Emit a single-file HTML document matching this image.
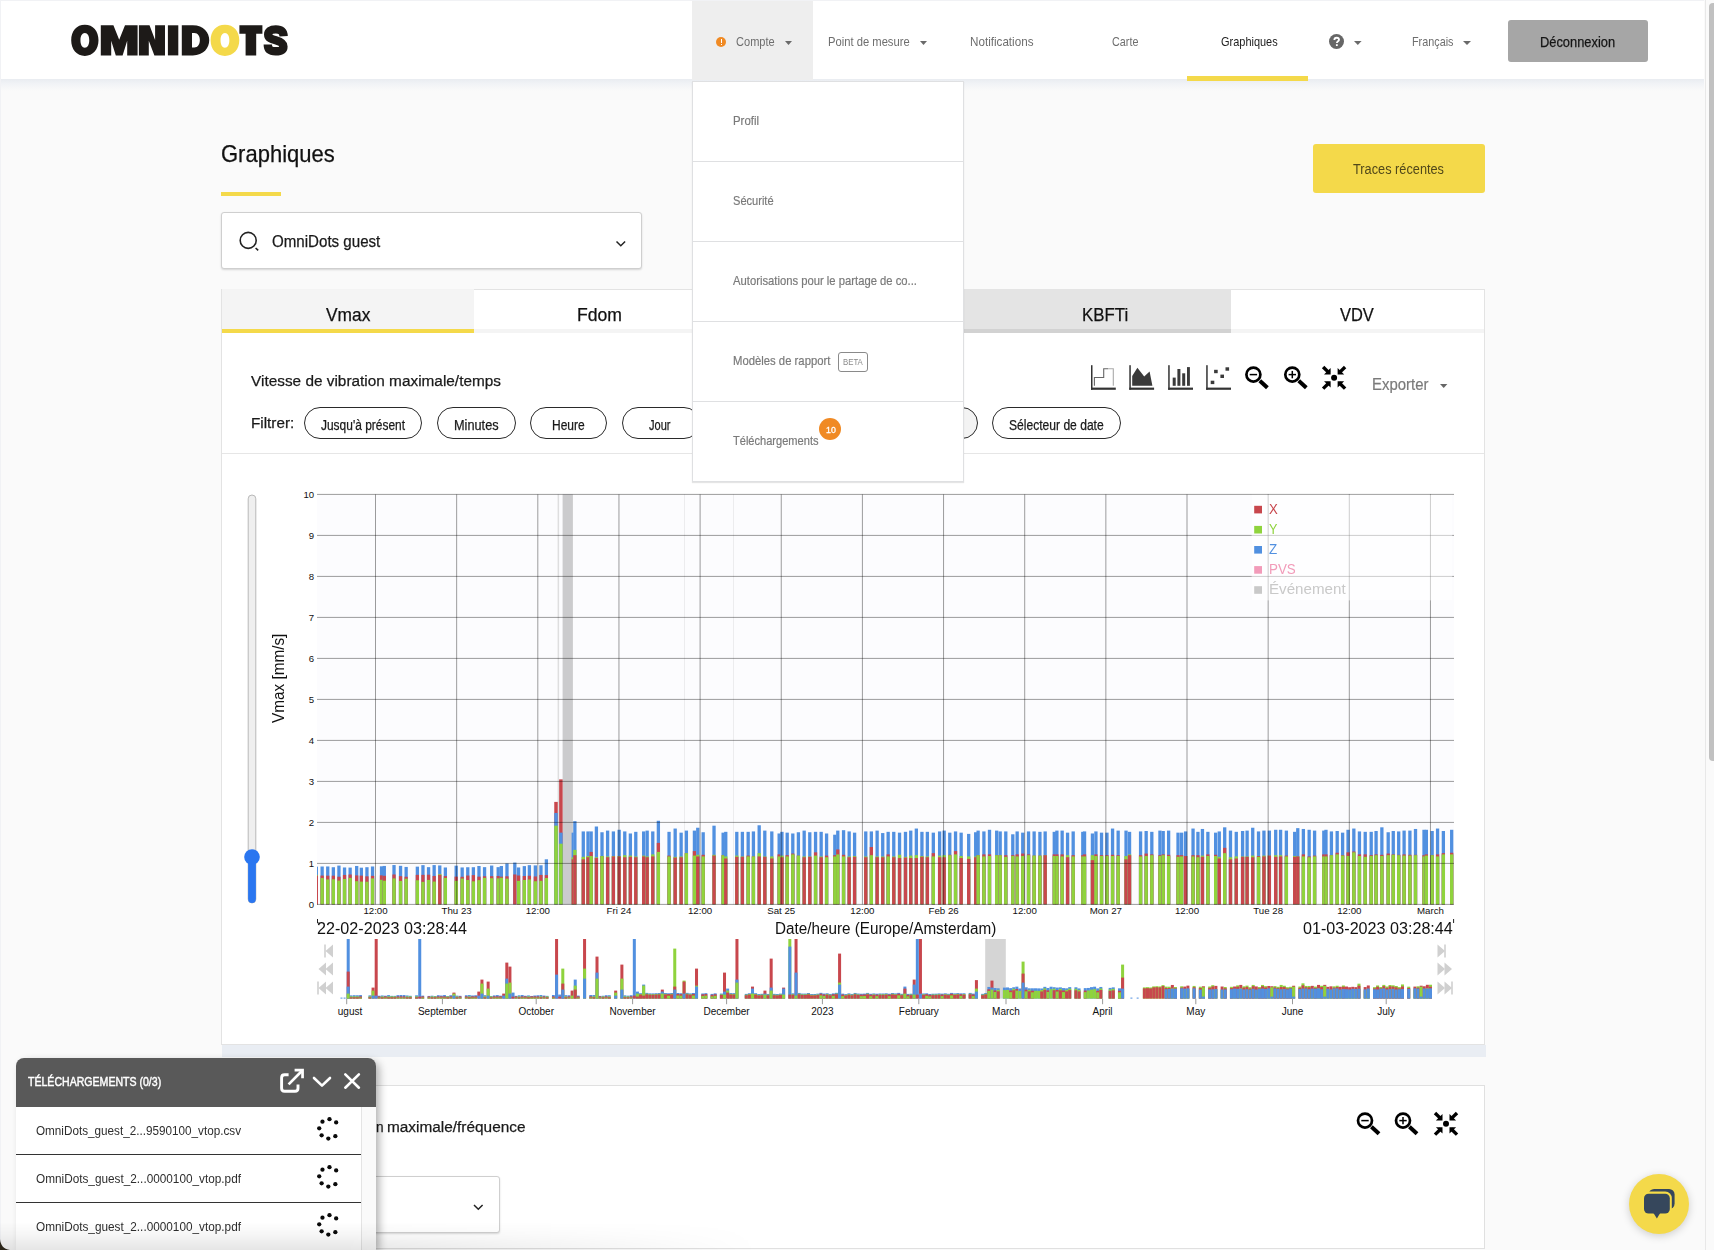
<!DOCTYPE html>
<html lang="fr"><head><meta charset="utf-8"><title>OmniDots - Graphiques</title><style>
html,body{margin:0;padding:0;}
html{width:1714px;height:1250px;overflow:hidden;}
body{width:1714px;height:1250px;overflow:hidden;position:relative;background:#fafafa;font-family:"Liberation Sans",sans-serif;}
.abs{position:absolute;}
.t{position:absolute;white-space:nowrap;line-height:1;transform-origin:0 0;display:block;}
svg{display:block;overflow:visible;}
</style></head>
<body>
<div class="abs" style="left:0;top:0;width:1714px;height:79px;background:#fff;"></div>
<div class="abs" style="left:0;top:79px;width:1714px;height:12px;background:linear-gradient(#e9ecf1,#f1f3f6 40%,#fafafa);"></div>
<div class="abs" style="left:0;top:0;width:1714px;height:1px;background:#f1f2f5;"></div>
<div class="abs" style="left:0;top:0;width:1px;height:1250px;background:#f1f2f5;"></div>
<div class="abs" style="left:692px;top:1px;width:121px;height:79px;background:#eeeeee;"></div>
<svg class="abs" style="left:60px;top:15px" width="240" height="50" viewBox="60 15 240 50"><path d="M84.85 24.80 C93.04 24.80 98.50 31.02 98.50 40.35 C98.50 49.68 93.04 55.90 84.85 55.90 C76.66 55.90 71.20 49.68 71.20 40.35 C71.20 31.02 76.66 24.80 84.85 24.80 Z M84.85 32.95 C82.12 32.95 80.45 35.76 80.45 40.35 C80.45 44.94 82.12 47.75 84.85 47.75 C87.58 47.75 89.25 44.94 89.25 40.35 C89.25 35.76 87.58 32.95 84.85 32.95 Z" fill="#1d1a18" fill-rule="evenodd"/><path d="M100.80 55.40 V25.30 H113.40 L119.20 39.80 L125.00 25.30 H137.60 V55.40 H127.20 V40.80 L122.60 55.40 H115.80 L111.20 40.80 V55.40 Z" fill="#1d1a18"/><path d="M138.90 55.40 V25.30 H149.50 L155.10 39.90 V25.30 H165.00 V55.40 H154.40 L148.80 40.80 V55.40 Z" fill="#1d1a18"/><rect x="167.9" y="25.30" width="10.4" height="30.10" fill="#1d1a18"/><path d="M181.80 25.30 H192.80 C214.80 25.30 214.80 55.40 192.80 55.40 H181.80 Z M192.00 33.10 H194.30 C201.77 33.10 201.77 47.60 194.30 47.60 H192.00 Z" fill="#1d1a18" fill-rule="evenodd"/><path d="M224.95 24.80 C233.56 24.80 239.30 31.02 239.30 40.35 C239.30 49.68 233.56 55.90 224.95 55.90 C216.34 55.90 210.60 49.68 210.60 40.35 C210.60 31.02 216.34 24.80 224.95 24.80 Z M224.95 32.95 C222.22 32.95 220.55 35.76 220.55 40.35 C220.55 44.94 222.22 47.75 224.95 47.75 C227.68 47.75 229.35 44.94 229.35 40.35 C229.35 35.76 227.68 32.95 224.95 32.95 Z" fill="#f4d94a" fill-rule="evenodd"/><path d="M239.40 25.30 H262.40 V33.70 H256.20 V55.40 H245.60 V33.70 H239.40 Z" fill="#1d1a18"/><path d="M283.6 36.2 C283.4 31.6 281 29.4 275.8 29.4 C270.4 29.4 268.2 31.6 268.2 34.4 C268.2 38.0 271.4 39.0 275.8 40.3 C280.6 41.7 283.4 43.0 283.4 46.4 C283.4 49.4 281 51.3 275.6 51.3 C270.2 51.3 267.8 49.2 267.8 44.6" fill="none" stroke="#1d1a18" stroke-width="8.4"/></svg>
<div class="abs" style="left:716.3px;top:37px;width:10px;height:10px;border-radius:50%;background:#f08a24;"></div>
<div class="abs" style="left:720.5px;top:38.8px;width:1.6px;height:4px;background:#fff;"></div>
<div class="abs" style="left:720.5px;top:43.8px;width:1.6px;height:1.6px;background:#fff;"></div>
<span class="t" id="t0" style="left:736.00px;top:36.00px;font-size:12.90px;color:#6e6e6e;transform:scaleX(0.8573);">Compte</span>
<svg class="abs" style="left:785.20px;top:40.60px;" width="7.0" height="4.0" viewBox="0 0 7.0 4.0"><path d="M0 0 H7.0 L3.50 4.0 Z" fill="#6a6a6a"/></svg>
<span class="t" id="t1" style="left:828.40px;top:36.00px;font-size:12.90px;color:#6e6e6e;transform:scaleX(0.8703);">Point de mesure</span>
<svg class="abs" style="left:920.30px;top:40.60px;" width="7.0" height="4.0" viewBox="0 0 7.0 4.0"><path d="M0 0 H7.0 L3.50 4.0 Z" fill="#6a6a6a"/></svg>
<span class="t" id="t2" style="left:970.00px;top:36.00px;font-size:12.90px;color:#6e6e6e;transform:scaleX(0.9043);">Notifications</span>
<span class="t" id="t3" style="left:1112.20px;top:36.00px;font-size:12.90px;color:#6e6e6e;transform:scaleX(0.8373);">Carte</span>
<span class="t" id="t4" style="left:1220.70px;top:36.00px;font-size:12.90px;color:#222;transform:scaleX(0.8506);">Graphiques</span>
<div class="abs" style="left:1187px;top:76px;width:121px;height:5px;background:#f4d94a;"></div>
<div class="abs" style="left:1328.7px;top:33.8px;width:15.4px;height:15.4px;border-radius:50%;background:#666;"></div>
<svg class="abs" style="left:1328.7px;top:33.8px" width="15.4" height="15.4" viewBox="0 0 16 16"><path d="M5.6 6.2 C5.6 4.6 6.7 3.9 8 3.9 C9.4 3.9 10.4 4.7 10.4 6 C10.4 7.6 8.2 7.6 8.2 9.4" fill="none" stroke="#fff" stroke-width="1.9"/><rect x="7.2" y="10.6" width="1.9" height="1.9" fill="#fff"/></svg>
<svg class="abs" style="left:1353.70px;top:40.60px;" width="7.6" height="4.0" viewBox="0 0 7.6 4.0"><path d="M0 0 H7.6 L3.80 4.0 Z" fill="#6a6a6a"/></svg>
<span class="t" id="t5" style="left:1411.60px;top:36.00px;font-size:12.90px;color:#6e6e6e;transform:scaleX(0.8394);">Fran&ccedil;ais</span>
<svg class="abs" style="left:1462.90px;top:40.60px;" width="8.0" height="4.0" viewBox="0 0 8.0 4.0"><path d="M0 0 H8.0 L4.00 4.0 Z" fill="#6a6a6a"/></svg>
<div class="abs" style="left:1508px;top:20px;width:140px;height:42px;border-radius:3px;background:#a6a6a6;"></div>
<span class="t" id="t6" style="left:1539.90px;top:35.00px;font-size:14.30px;color:#151515;transform:scaleX(0.8997);-webkit-text-stroke:0.25px currentColor;">D&eacute;connexion</span>
<span class="t" id="t7" style="left:221.00px;top:142.00px;font-size:24.00px;color:#111;transform:scaleX(0.9164);-webkit-text-stroke:0.25px currentColor;">Graphiques</span>
<div class="abs" style="left:221px;top:192px;width:60px;height:4px;background:#f4d94a;"></div>
<div class="abs" style="left:1313px;top:144px;width:172px;height:49px;border-radius:3px;background:#f4d94a;"></div>
<span class="t" id="t8" style="left:1353.20px;top:161.00px;font-size:15.20px;color:#51481a;transform:scaleX(0.8400);">Traces r&eacute;centes</span>
<div class="abs" style="left:221px;top:212px;width:421px;height:57px;box-sizing:border-box;border:1px solid #cfcfcf;border-radius:3px;background:#fff;box-shadow:0 1px 2px rgba(0,0,0,0.15);"></div>
<svg class="abs" style="left:236px;top:228px" width="26" height="26" viewBox="236 228 26 26"><circle cx="248.2" cy="240.4" r="8" fill="none" stroke="#222" stroke-width="1.6"/><path d="M255.6 248 L258.2 250.4" stroke="#222" stroke-width="1.6" fill="none"/></svg>
<span class="t" id="t9" style="left:272.00px;top:234.00px;font-size:16.00px;color:#1a1a1a;transform:scaleX(0.9440);-webkit-text-stroke:0.25px currentColor;">OmniDots guest</span>
<svg class="abs" style="left:614px;top:238px" width="14" height="12" viewBox="614 238 14 12"><path d="M616.5 241.5 L620.8 245.8 L625.1 241.5" fill="none" stroke="#222" stroke-width="1.5"/></svg>
<div class="abs" style="left:221px;top:289px;width:1264px;height:756px;box-sizing:border-box;border:1px solid #e3e3e3;background:#fff;"></div>
<div class="abs" style="left:222px;top:289px;width:252px;height:40px;background:#f4f4f4;"></div>
<div class="abs" style="left:222px;top:329px;width:252px;height:4px;background:#f4d94a;"></div>
<div class="abs" style="left:474px;top:329px;width:505px;height:4px;background:#f4f4f4;"></div>
<div class="abs" style="left:900px;top:289px;width:331px;height:40px;background:#e4e4e4;"></div>
<div class="abs" style="left:900px;top:329px;width:331px;height:4px;background:#d2d2d2;"></div>
<div class="abs" style="left:1231px;top:329px;width:253px;height:4px;background:#f4f4f4;"></div>
<span class="t" id="t10" style="left:325.50px;top:305.00px;font-size:19.00px;color:#111;transform:scaleX(0.9119);-webkit-text-stroke:0.25px currentColor;">Vmax</span>
<span class="t" id="t11" style="left:577.40px;top:305.00px;font-size:19.00px;color:#111;transform:scaleX(0.9263);-webkit-text-stroke:0.25px currentColor;">Fdom</span>
<span class="t" id="t12" style="left:1081.80px;top:305.00px;font-size:19.00px;color:#111;transform:scaleX(0.8871);-webkit-text-stroke:0.25px currentColor;">KBFTi</span>
<span class="t" id="t13" style="left:1340.20px;top:305.00px;font-size:19.00px;color:#111;transform:scaleX(0.8649);-webkit-text-stroke:0.25px currentColor;">VDV</span>
<span class="t" id="t14" style="left:250.80px;top:373.00px;font-size:15.50px;color:#1a1a1a;transform:scaleX(0.9915);-webkit-text-stroke:0.25px currentColor;">Vitesse de vibration maximale/temps</span>
<span class="t" id="t15" style="left:250.80px;top:415.00px;font-size:15.20px;color:#1a1a1a;transform:scaleX(1.0039);-webkit-text-stroke:0.25px currentColor;">Filtrer:</span>
<div class="abs" style="left:304.0px;top:407px;width:117.8px;height:32px;box-sizing:border-box;border:1px solid #2a2a2a;border-radius:16px;background:#fff;"></div>
<span class="t" id="t16" style="left:320.90px;top:418.00px;font-size:14.00px;color:#1a1a1a;transform:scaleX(0.8536);-webkit-text-stroke:0.25px currentColor;">Jusqu'&agrave; pr&eacute;sent</span>
<div class="abs" style="left:436.8px;top:407px;width:78.9px;height:32px;box-sizing:border-box;border:1px solid #2a2a2a;border-radius:16px;background:#fff;"></div>
<span class="t" id="t17" style="left:453.80px;top:418.00px;font-size:14.00px;color:#1a1a1a;transform:scaleX(0.9096);-webkit-text-stroke:0.25px currentColor;">Minutes</span>
<div class="abs" style="left:530.0px;top:407px;width:76.6px;height:32px;box-sizing:border-box;border:1px solid #2a2a2a;border-radius:16px;background:#fff;"></div>
<span class="t" id="t18" style="left:552.00px;top:418.00px;font-size:14.00px;color:#1a1a1a;transform:scaleX(0.8574);-webkit-text-stroke:0.25px currentColor;">Heure</span>
<div class="abs" style="left:622.0px;top:407px;width:78.0px;height:32px;box-sizing:border-box;border:1px solid #2a2a2a;border-radius:16px;background:#fff;"></div>
<span class="t" id="t19" style="left:649.00px;top:418.00px;font-size:14.00px;color:#1a1a1a;transform:scaleX(0.7894);-webkit-text-stroke:0.25px currentColor;">Jour</span>
<div class="abs" style="left:900.0px;top:407px;width:78.4px;height:32px;box-sizing:border-box;border:1px solid #2a2a2a;border-radius:16px;background:#f3f3f3;"></div>
<div class="abs" style="left:991.7px;top:407px;width:129.0px;height:32px;box-sizing:border-box;border:1px solid #2a2a2a;border-radius:16px;background:#fff;"></div>
<span class="t" id="t20" style="left:1009.00px;top:418.00px;font-size:14.00px;color:#1a1a1a;transform:scaleX(0.8629);-webkit-text-stroke:0.25px currentColor;">S&eacute;lecteur de date</span>
<span class="t" id="t21" style="left:1372.20px;top:377.00px;font-size:16.60px;color:#7a7a7a;transform:scaleX(0.8993);-webkit-text-stroke:0.2px #7a7a7a;">Exporter</span>
<svg class="abs" style="left:1439.60px;top:384.20px;" width="7.4" height="4.0" viewBox="0 0 7.4 4.0"><path d="M0 0 H7.4 L3.70 4.0 Z" fill="#666"/></svg>
<div class="abs" style="left:222px;top:453px;width:1262px;height:1px;background:#e6e6e6;"></div>
<svg class="abs" style="left:1085px;top:360px" width="370" height="36" viewBox="1085 360 370 36"><rect x="1091.0" y="365.2" width="1.5" height="24.6" fill="#333"/><rect x="1091.0" y="387.6" width="24.8" height="2.2" fill="#333"/><path d="M1094.4 385.8 V377.5 H1103.7 V368.8 H1108" fill="none" stroke="#666" stroke-width="1.1"/><path d="M1108 368.8 H1113.3 V385.8" fill="none" stroke="#aaa" stroke-width="1.1"/><rect x="1129.3" y="365.2" width="1.5" height="24.6" fill="#333"/><rect x="1129.3" y="387.6" width="24.8" height="2.2" fill="#333"/><path d="M1132.2 385.8 V376.1 L1137.4 367.7 L1144.2 376.5 L1149.6 371.6 L1152.4 385.8 Z" fill="#3a3a3a"/><rect x="1168.2" y="365.2" width="1.5" height="24.6" fill="#333"/><rect x="1168.2" y="387.6" width="24.8" height="2.2" fill="#333"/><rect x="1172.7" y="377.6" width="3.0" height="8.2" fill="#3a3a3a"/><rect x="1177.4" y="369.0" width="3.0" height="16.8" fill="#3a3a3a"/><rect x="1182.2" y="373.3" width="3.0" height="12.5" fill="#3a3a3a"/><rect x="1187.0" y="367.1" width="2.9" height="18.7" fill="#3a3a3a"/><rect x="1206.2" y="365.2" width="1.5" height="24.6" fill="#333"/><rect x="1206.2" y="387.6" width="24.8" height="2.2" fill="#333"/><rect x="1210.7" y="380.7" width="3.6" height="3.4" fill="#3a3a3a"/><rect x="1214.1" y="369.8" width="3.6" height="3.4" fill="#3a3a3a"/><rect x="1220.4" y="374.6" width="3.6" height="3.4" fill="#3a3a3a"/><rect x="1225.5" y="367.3" width="3.6" height="3.4" fill="#3a3a3a"/><circle cx="1253.40" cy="374.60" r="7.00" fill="none" stroke="#000" stroke-width="2.70"/><path d="M1259.80 380.80 L1267.40 387.80" stroke="#000" stroke-width="4.00" stroke-linecap="butt"/><path d="M1249.70 374.60 H1257.10" stroke="#000" stroke-width="1.50"/><circle cx="1292.30" cy="374.60" r="7.00" fill="none" stroke="#000" stroke-width="2.70"/><path d="M1298.70 380.80 L1306.30 387.80" stroke="#000" stroke-width="4.00" stroke-linecap="butt"/><path d="M1288.60 374.60 H1296.00" stroke="#000" stroke-width="1.50"/><path d="M1292.30 370.90 V378.30" stroke="#000" stroke-width="1.50"/><circle cx="1334.10" cy="377.80" r="3.00" fill="#000"/><path d="M1323.10 367.00 L1329.10 372.90" stroke="#000" stroke-width="3.40"/><path d="M1330.60 374.40 L1324.00 374.40 L1330.60 368.00 Z" fill="#000"/><path d="M1323.10 388.60 L1329.10 382.70" stroke="#000" stroke-width="3.40"/><path d="M1330.60 381.20 L1324.00 381.20 L1330.60 387.60 Z" fill="#000"/><path d="M1345.10 367.00 L1339.10 372.90" stroke="#000" stroke-width="3.40"/><path d="M1337.60 374.40 L1344.20 374.40 L1337.60 368.00 Z" fill="#000"/><path d="M1345.10 388.60 L1339.10 382.70" stroke="#000" stroke-width="3.40"/><path d="M1337.60 381.20 L1344.20 381.20 L1337.60 387.60 Z" fill="#000"/></svg>
<svg class="abs" style="left:222px;top:460px" width="1262" height="580" viewBox="222 460 1262 580" font-family="Liberation Sans, sans-serif"><rect x="317.0" y="494.4" width="1137.0" height="410.0" fill="#fcfcfe"/><rect x="684" y="494.4" width="1" height="410.0" fill="#ececee"/><rect x="733" y="494.4" width="1" height="410.0" fill="#ececee"/><rect x="557.6" y="494.4" width="1.5" height="410.0" fill="#dededf"/><rect x="562.6" y="494.4" width="10.3" height="410.0" fill="#cbcbcd"/><rect x="317.00" y="866.68" width="1.00" height="37.72" fill="#5190e0"/><rect x="317.00" y="874.88" width="1.00" height="29.52" fill="#8fd33d"/><rect x="317.00" y="875.70" width="1.00" height="28.70" fill="#c8474d"/><rect x="320.49" y="866.50" width="3.30" height="37.90" fill="#5190e0"/><rect x="320.49" y="875.55" width="3.30" height="28.85" fill="#c8474d"/><rect x="320.49" y="878.06" width="3.30" height="26.34" fill="#8fd33d"/><rect x="326.09" y="866.46" width="3.30" height="37.94" fill="#5190e0"/><rect x="326.09" y="875.68" width="3.30" height="28.72" fill="#c8474d"/><rect x="326.09" y="879.44" width="3.30" height="24.96" fill="#8fd33d"/><rect x="331.69" y="867.21" width="3.30" height="37.19" fill="#5190e0"/><rect x="331.69" y="875.67" width="3.30" height="28.73" fill="#c8474d"/><rect x="331.69" y="879.27" width="3.30" height="25.13" fill="#8fd33d"/><rect x="337.29" y="865.59" width="3.30" height="38.81" fill="#5190e0"/><rect x="337.29" y="876.70" width="3.30" height="27.70" fill="#c8474d"/><rect x="337.29" y="880.61" width="3.30" height="23.79" fill="#8fd33d"/><rect x="342.89" y="867.46" width="3.30" height="36.94" fill="#5190e0"/><rect x="342.89" y="874.94" width="3.30" height="29.46" fill="#c8474d"/><rect x="342.89" y="879.01" width="3.30" height="25.39" fill="#8fd33d"/><rect x="348.49" y="867.59" width="3.30" height="36.81" fill="#5190e0"/><rect x="348.49" y="874.51" width="3.30" height="29.89" fill="#c8474d"/><rect x="348.49" y="877.89" width="3.30" height="26.51" fill="#8fd33d"/><rect x="355.03" y="865.96" width="3.30" height="38.44" fill="#5190e0"/><rect x="355.03" y="875.42" width="3.30" height="28.98" fill="#c8474d"/><rect x="355.03" y="881.20" width="3.30" height="23.20" fill="#8fd33d"/><rect x="359.69" y="867.67" width="3.30" height="36.73" fill="#5190e0"/><rect x="359.69" y="875.63" width="3.30" height="28.77" fill="#c8474d"/><rect x="359.69" y="881.61" width="3.30" height="22.79" fill="#8fd33d"/><rect x="365.30" y="867.20" width="3.30" height="37.20" fill="#5190e0"/><rect x="365.30" y="876.33" width="3.30" height="28.07" fill="#c8474d"/><rect x="365.30" y="881.73" width="3.30" height="22.67" fill="#8fd33d"/><rect x="370.90" y="866.47" width="3.30" height="37.93" fill="#5190e0"/><rect x="370.90" y="875.85" width="3.30" height="28.55" fill="#c8474d"/><rect x="370.90" y="878.40" width="3.30" height="26.00" fill="#8fd33d"/><rect x="379.86" y="866.32" width="3.30" height="38.08" fill="#5190e0"/><rect x="379.86" y="875.35" width="3.30" height="29.05" fill="#c8474d"/><rect x="379.86" y="879.80" width="3.30" height="24.60" fill="#8fd33d"/><rect x="382.66" y="865.94" width="3.30" height="38.46" fill="#5190e0"/><rect x="382.66" y="875.80" width="3.30" height="28.60" fill="#c8474d"/><rect x="382.66" y="880.71" width="3.30" height="23.69" fill="#8fd33d"/><rect x="392.37" y="865.05" width="3.30" height="39.35" fill="#5190e0"/><rect x="392.37" y="874.48" width="3.30" height="29.92" fill="#c8474d"/><rect x="392.37" y="878.41" width="3.30" height="25.99" fill="#8fd33d"/><rect x="398.90" y="865.82" width="3.30" height="38.58" fill="#5190e0"/><rect x="398.90" y="876.15" width="3.30" height="28.25" fill="#c8474d"/><rect x="398.90" y="880.91" width="3.30" height="23.49" fill="#8fd33d"/><rect x="404.50" y="866.93" width="3.30" height="37.47" fill="#5190e0"/><rect x="404.50" y="876.76" width="3.30" height="27.64" fill="#c8474d"/><rect x="404.50" y="878.71" width="3.30" height="25.69" fill="#8fd33d"/><rect x="415.71" y="866.64" width="3.30" height="37.76" fill="#5190e0"/><rect x="415.71" y="874.85" width="3.30" height="29.55" fill="#c8474d"/><rect x="415.71" y="880.27" width="3.30" height="24.13" fill="#8fd33d"/><rect x="421.31" y="865.15" width="3.30" height="39.25" fill="#5190e0"/><rect x="421.31" y="874.85" width="3.30" height="29.55" fill="#c8474d"/><rect x="421.31" y="881.85" width="3.30" height="22.55" fill="#8fd33d"/><rect x="426.91" y="867.15" width="3.30" height="37.25" fill="#5190e0"/><rect x="426.91" y="874.69" width="3.30" height="29.71" fill="#c8474d"/><rect x="426.91" y="879.92" width="3.30" height="24.48" fill="#8fd33d"/><rect x="432.51" y="865.09" width="3.30" height="39.31" fill="#5190e0"/><rect x="432.51" y="875.95" width="3.30" height="28.45" fill="#c8474d"/><rect x="432.51" y="881.55" width="3.30" height="22.85" fill="#8fd33d"/><rect x="438.11" y="865.45" width="3.30" height="38.95" fill="#5190e0"/><rect x="438.11" y="874.06" width="3.30" height="30.34" fill="#8fd33d"/><rect x="438.11" y="874.88" width="3.30" height="29.52" fill="#c8474d"/><rect x="443.71" y="867.47" width="3.30" height="36.93" fill="#5190e0"/><rect x="443.71" y="876.11" width="3.30" height="28.29" fill="#c8474d"/><rect x="443.71" y="877.90" width="3.30" height="26.50" fill="#8fd33d"/><rect x="454.54" y="865.68" width="3.30" height="38.72" fill="#5190e0"/><rect x="454.54" y="876.64" width="3.30" height="27.76" fill="#c8474d"/><rect x="454.54" y="880.84" width="3.30" height="23.56" fill="#8fd33d"/><rect x="460.52" y="867.44" width="3.30" height="36.96" fill="#5190e0"/><rect x="460.52" y="876.78" width="3.30" height="27.62" fill="#c8474d"/><rect x="460.52" y="878.58" width="3.30" height="25.82" fill="#8fd33d"/><rect x="466.12" y="867.23" width="3.30" height="37.17" fill="#5190e0"/><rect x="466.12" y="875.55" width="3.30" height="28.85" fill="#c8474d"/><rect x="466.12" y="880.02" width="3.30" height="24.38" fill="#8fd33d"/><rect x="471.72" y="867.20" width="3.30" height="37.20" fill="#5190e0"/><rect x="471.72" y="875.13" width="3.30" height="29.27" fill="#c8474d"/><rect x="471.72" y="881.31" width="3.30" height="23.09" fill="#8fd33d"/><rect x="477.32" y="865.99" width="3.30" height="38.41" fill="#5190e0"/><rect x="477.32" y="876.64" width="3.30" height="27.76" fill="#c8474d"/><rect x="477.32" y="880.12" width="3.30" height="24.28" fill="#8fd33d"/><rect x="482.92" y="867.14" width="3.30" height="37.26" fill="#5190e0"/><rect x="482.92" y="876.27" width="3.30" height="28.13" fill="#c8474d"/><rect x="482.92" y="877.87" width="3.30" height="26.53" fill="#8fd33d"/><rect x="490.02" y="865.56" width="3.30" height="38.84" fill="#5190e0"/><rect x="490.02" y="876.18" width="3.30" height="28.22" fill="#c8474d"/><rect x="490.02" y="878.22" width="3.30" height="26.18" fill="#8fd33d"/><rect x="496.55" y="867.14" width="3.30" height="37.26" fill="#5190e0"/><rect x="496.55" y="875.96" width="3.30" height="28.44" fill="#c8474d"/><rect x="496.55" y="878.35" width="3.30" height="26.05" fill="#8fd33d"/><rect x="499.72" y="865.99" width="3.30" height="38.41" fill="#5190e0"/><rect x="499.72" y="876.68" width="3.30" height="27.72" fill="#c8474d"/><rect x="499.72" y="877.79" width="3.30" height="26.61" fill="#8fd33d"/><rect x="505.33" y="863.40" width="3.30" height="41.00" fill="#5190e0"/><rect x="505.33" y="876.29" width="3.30" height="28.11" fill="#c8474d"/><rect x="505.33" y="878.68" width="3.30" height="25.72" fill="#8fd33d"/><rect x="513.17" y="862.58" width="3.30" height="41.82" fill="#5190e0"/><rect x="513.17" y="874.47" width="3.30" height="29.93" fill="#c8474d"/><rect x="516.90" y="867.46" width="3.30" height="36.94" fill="#5190e0"/><rect x="516.90" y="875.50" width="3.30" height="28.90" fill="#c8474d"/><rect x="516.90" y="880.85" width="3.30" height="23.55" fill="#8fd33d"/><rect x="522.69" y="866.10" width="3.30" height="38.30" fill="#5190e0"/><rect x="522.69" y="876.02" width="3.30" height="28.38" fill="#c8474d"/><rect x="522.69" y="879.99" width="3.30" height="24.41" fill="#8fd33d"/><rect x="527.73" y="865.15" width="3.30" height="39.25" fill="#5190e0"/><rect x="527.73" y="875.74" width="3.30" height="28.66" fill="#c8474d"/><rect x="527.73" y="879.49" width="3.30" height="24.91" fill="#8fd33d"/><rect x="533.70" y="865.40" width="3.30" height="39.00" fill="#5190e0"/><rect x="533.70" y="876.48" width="3.30" height="27.92" fill="#c8474d"/><rect x="533.70" y="881.22" width="3.30" height="23.18" fill="#8fd33d"/><rect x="539.31" y="865.28" width="3.30" height="39.12" fill="#5190e0"/><rect x="539.31" y="874.92" width="3.30" height="29.48" fill="#c8474d"/><rect x="539.31" y="880.83" width="3.30" height="23.57" fill="#8fd33d"/><rect x="544.72" y="859.30" width="3.30" height="45.10" fill="#5190e0"/><rect x="544.72" y="875.11" width="3.30" height="29.29" fill="#c8474d"/><rect x="544.72" y="877.99" width="3.30" height="26.41" fill="#8fd33d"/><rect x="554.25" y="801.90" width="3.50" height="102.50" fill="#c8474d"/><rect x="554.25" y="812.97" width="3.50" height="91.43" fill="#5190e0"/><rect x="554.25" y="825.68" width="3.50" height="78.72" fill="#8fd33d"/><rect x="559.15" y="779.35" width="3.50" height="125.05" fill="#c8474d"/><rect x="559.15" y="832.65" width="3.50" height="71.75" fill="#5190e0"/><rect x="559.15" y="843.72" width="3.50" height="60.68" fill="#8fd33d"/><rect x="571.60" y="832.65" width="2.00" height="71.75" fill="#5190e0"/><rect x="571.60" y="857.25" width="2.00" height="47.15" fill="#8fd33d"/><rect x="571.60" y="859.30" width="2.00" height="45.10" fill="#c8474d"/><rect x="573.23" y="821.17" width="3.30" height="83.23" fill="#5190e0"/><rect x="573.23" y="849.87" width="3.30" height="54.53" fill="#8fd33d"/><rect x="573.23" y="855.20" width="3.30" height="49.20" fill="#c8474d"/><rect x="581.63" y="831.42" width="3.30" height="72.98" fill="#5190e0"/><rect x="581.63" y="856.84" width="3.30" height="47.56" fill="#8fd33d"/><rect x="581.63" y="859.30" width="3.30" height="45.10" fill="#c8474d"/><rect x="586.36" y="831.42" width="3.30" height="72.98" fill="#5190e0"/><rect x="586.36" y="856.02" width="3.30" height="48.38" fill="#8fd33d"/><rect x="586.36" y="857.25" width="3.30" height="47.15" fill="#c8474d"/><rect x="589.51" y="831.42" width="3.30" height="72.98" fill="#5190e0"/><rect x="589.51" y="851.92" width="3.30" height="52.48" fill="#c8474d"/><rect x="589.51" y="856.02" width="3.30" height="48.38" fill="#8fd33d"/><rect x="594.76" y="826.50" width="3.30" height="77.90" fill="#5190e0"/><rect x="594.76" y="857.25" width="3.30" height="47.15" fill="#8fd33d"/><rect x="594.76" y="858.07" width="3.30" height="46.33" fill="#c8474d"/><rect x="600.36" y="832.24" width="3.30" height="72.16" fill="#5190e0"/><rect x="600.36" y="856.02" width="3.30" height="48.38" fill="#c8474d"/><rect x="600.36" y="856.02" width="3.30" height="48.38" fill="#8fd33d"/><rect x="605.96" y="830.60" width="3.30" height="73.80" fill="#5190e0"/><rect x="605.96" y="856.43" width="3.30" height="47.97" fill="#8fd33d"/><rect x="605.96" y="857.25" width="3.30" height="47.15" fill="#c8474d"/><rect x="611.74" y="831.42" width="3.30" height="72.98" fill="#5190e0"/><rect x="611.74" y="856.02" width="3.30" height="48.38" fill="#8fd33d"/><rect x="611.74" y="856.43" width="3.30" height="47.97" fill="#c8474d"/><rect x="617.51" y="829.78" width="3.30" height="74.62" fill="#5190e0"/><rect x="617.51" y="856.02" width="3.30" height="48.38" fill="#8fd33d"/><rect x="617.51" y="856.43" width="3.30" height="47.97" fill="#c8474d"/><rect x="623.11" y="831.42" width="3.30" height="72.98" fill="#5190e0"/><rect x="623.11" y="855.20" width="3.30" height="49.20" fill="#8fd33d"/><rect x="623.11" y="857.25" width="3.30" height="47.15" fill="#c8474d"/><rect x="628.72" y="833.47" width="3.30" height="70.93" fill="#5190e0"/><rect x="628.72" y="855.61" width="3.30" height="48.79" fill="#8fd33d"/><rect x="628.72" y="856.84" width="3.30" height="47.56" fill="#c8474d"/><rect x="634.14" y="831.83" width="3.30" height="72.57" fill="#5190e0"/><rect x="634.14" y="856.43" width="3.30" height="47.97" fill="#8fd33d"/><rect x="634.14" y="857.25" width="3.30" height="47.15" fill="#c8474d"/><rect x="642.02" y="831.42" width="3.30" height="72.98" fill="#5190e0"/><rect x="642.02" y="855.61" width="3.30" height="48.79" fill="#8fd33d"/><rect x="642.02" y="856.43" width="3.30" height="47.97" fill="#c8474d"/><rect x="645.52" y="830.60" width="3.30" height="73.80" fill="#5190e0"/><rect x="645.52" y="856.43" width="3.30" height="47.97" fill="#8fd33d"/><rect x="645.52" y="857.25" width="3.30" height="47.15" fill="#c8474d"/><rect x="651.12" y="831.42" width="3.30" height="72.98" fill="#5190e0"/><rect x="651.12" y="854.38" width="3.30" height="50.02" fill="#8fd33d"/><rect x="651.12" y="856.43" width="3.30" height="47.97" fill="#c8474d"/><rect x="656.72" y="820.76" width="3.30" height="83.64" fill="#5190e0"/><rect x="656.72" y="842.90" width="3.30" height="61.50" fill="#c8474d"/><rect x="656.72" y="851.92" width="3.30" height="52.48" fill="#8fd33d"/><rect x="667.40" y="831.83" width="3.30" height="72.57" fill="#5190e0"/><rect x="667.40" y="855.61" width="3.30" height="48.79" fill="#c8474d"/><rect x="667.40" y="856.43" width="3.30" height="47.97" fill="#8fd33d"/><rect x="673.53" y="828.55" width="3.30" height="75.85" fill="#5190e0"/><rect x="673.53" y="856.84" width="3.30" height="47.56" fill="#8fd33d"/><rect x="673.53" y="857.66" width="3.30" height="46.74" fill="#c8474d"/><rect x="679.48" y="832.65" width="3.30" height="71.75" fill="#5190e0"/><rect x="679.48" y="856.43" width="3.30" height="47.97" fill="#8fd33d"/><rect x="679.48" y="857.25" width="3.30" height="47.15" fill="#c8474d"/><rect x="684.73" y="830.60" width="3.30" height="73.80" fill="#5190e0"/><rect x="684.73" y="853.15" width="3.30" height="51.25" fill="#c8474d"/><rect x="684.73" y="853.15" width="3.30" height="51.25" fill="#8fd33d"/><rect x="692.78" y="830.60" width="3.30" height="73.80" fill="#5190e0"/><rect x="692.78" y="851.10" width="3.30" height="53.30" fill="#c8474d"/><rect x="692.78" y="855.61" width="3.30" height="48.79" fill="#8fd33d"/><rect x="696.11" y="827.73" width="3.30" height="76.67" fill="#5190e0"/><rect x="696.11" y="854.79" width="3.30" height="49.61" fill="#8fd33d"/><rect x="696.11" y="856.43" width="3.30" height="47.97" fill="#c8474d"/><rect x="701.53" y="832.24" width="3.30" height="72.16" fill="#5190e0"/><rect x="701.53" y="854.79" width="3.30" height="49.61" fill="#c8474d"/><rect x="701.53" y="856.43" width="3.30" height="47.97" fill="#8fd33d"/><rect x="712.38" y="825.68" width="3.30" height="78.72" fill="#5190e0"/><rect x="712.38" y="854.79" width="3.30" height="49.61" fill="#8fd33d"/><rect x="712.38" y="855.61" width="3.30" height="48.79" fill="#c8474d"/><rect x="721.49" y="832.65" width="3.30" height="71.75" fill="#5190e0"/><rect x="721.49" y="855.20" width="3.30" height="49.20" fill="#c8474d"/><rect x="721.49" y="855.20" width="3.30" height="49.20" fill="#8fd33d"/><rect x="724.11" y="831.83" width="3.30" height="72.57" fill="#5190e0"/><rect x="724.11" y="856.43" width="3.30" height="47.97" fill="#8fd33d"/><rect x="724.11" y="858.48" width="3.30" height="45.92" fill="#c8474d"/><rect x="735.14" y="831.83" width="3.30" height="72.57" fill="#5190e0"/><rect x="735.14" y="855.61" width="3.30" height="48.79" fill="#8fd33d"/><rect x="735.14" y="856.84" width="3.30" height="47.56" fill="#c8474d"/><rect x="740.74" y="831.83" width="3.30" height="72.57" fill="#5190e0"/><rect x="740.74" y="856.43" width="3.30" height="47.97" fill="#8fd33d"/><rect x="740.74" y="856.84" width="3.30" height="47.56" fill="#c8474d"/><rect x="746.52" y="831.83" width="3.30" height="72.57" fill="#5190e0"/><rect x="746.52" y="855.61" width="3.30" height="48.79" fill="#c8474d"/><rect x="746.52" y="856.43" width="3.30" height="47.97" fill="#8fd33d"/><rect x="751.77" y="831.42" width="3.30" height="72.98" fill="#5190e0"/><rect x="751.77" y="856.43" width="3.30" height="47.97" fill="#c8474d"/><rect x="751.77" y="856.43" width="3.30" height="47.97" fill="#8fd33d"/><rect x="757.54" y="825.27" width="3.30" height="79.13" fill="#5190e0"/><rect x="757.54" y="853.15" width="3.30" height="51.25" fill="#8fd33d"/><rect x="757.54" y="856.43" width="3.30" height="47.97" fill="#c8474d"/><rect x="763.15" y="830.60" width="3.30" height="73.80" fill="#5190e0"/><rect x="763.15" y="856.43" width="3.30" height="47.97" fill="#8fd33d"/><rect x="763.15" y="856.84" width="3.30" height="47.56" fill="#c8474d"/><rect x="770.15" y="831.42" width="3.30" height="72.98" fill="#5190e0"/><rect x="770.15" y="856.43" width="3.30" height="47.97" fill="#8fd33d"/><rect x="770.15" y="858.48" width="3.30" height="45.92" fill="#c8474d"/><rect x="777.50" y="833.47" width="3.30" height="70.93" fill="#5190e0"/><rect x="777.50" y="854.38" width="3.30" height="50.02" fill="#c8474d"/><rect x="777.50" y="856.43" width="3.30" height="47.97" fill="#8fd33d"/><rect x="780.30" y="831.83" width="3.30" height="72.57" fill="#5190e0"/><rect x="780.30" y="855.61" width="3.30" height="48.79" fill="#8fd33d"/><rect x="780.30" y="857.25" width="3.30" height="47.15" fill="#c8474d"/><rect x="785.55" y="832.65" width="3.30" height="71.75" fill="#5190e0"/><rect x="785.55" y="855.20" width="3.30" height="49.20" fill="#c8474d"/><rect x="785.55" y="856.43" width="3.30" height="47.97" fill="#8fd33d"/><rect x="791.15" y="833.47" width="3.30" height="70.93" fill="#5190e0"/><rect x="791.15" y="853.56" width="3.30" height="50.84" fill="#c8474d"/><rect x="791.15" y="854.38" width="3.30" height="50.02" fill="#8fd33d"/><rect x="796.75" y="832.24" width="3.30" height="72.16" fill="#5190e0"/><rect x="796.75" y="855.61" width="3.30" height="48.79" fill="#c8474d"/><rect x="796.75" y="855.61" width="3.30" height="48.79" fill="#8fd33d"/><rect x="802.53" y="830.60" width="3.30" height="73.80" fill="#5190e0"/><rect x="802.53" y="856.43" width="3.30" height="47.97" fill="#8fd33d"/><rect x="802.53" y="857.25" width="3.30" height="47.15" fill="#c8474d"/><rect x="808.13" y="832.24" width="3.30" height="72.16" fill="#5190e0"/><rect x="808.13" y="856.43" width="3.30" height="47.97" fill="#8fd33d"/><rect x="808.13" y="856.84" width="3.30" height="47.56" fill="#c8474d"/><rect x="813.91" y="831.83" width="3.30" height="72.57" fill="#5190e0"/><rect x="813.91" y="852.33" width="3.30" height="52.07" fill="#c8474d"/><rect x="813.91" y="855.61" width="3.30" height="48.79" fill="#8fd33d"/><rect x="819.51" y="831.83" width="3.30" height="72.57" fill="#5190e0"/><rect x="819.51" y="856.43" width="3.30" height="47.97" fill="#8fd33d"/><rect x="819.51" y="857.25" width="3.30" height="47.15" fill="#c8474d"/><rect x="824.93" y="833.47" width="3.30" height="70.93" fill="#5190e0"/><rect x="824.93" y="855.61" width="3.30" height="48.79" fill="#c8474d"/><rect x="824.93" y="857.25" width="3.30" height="47.15" fill="#8fd33d"/><rect x="833.16" y="834.70" width="3.30" height="69.70" fill="#5190e0"/><rect x="833.16" y="855.20" width="3.30" height="49.20" fill="#c8474d"/><rect x="833.16" y="856.43" width="3.30" height="47.97" fill="#8fd33d"/><rect x="836.14" y="830.60" width="3.30" height="73.80" fill="#5190e0"/><rect x="836.14" y="849.46" width="3.30" height="54.94" fill="#c8474d"/><rect x="836.14" y="854.38" width="3.30" height="50.02" fill="#8fd33d"/><rect x="841.91" y="830.19" width="3.30" height="74.21" fill="#5190e0"/><rect x="841.91" y="854.79" width="3.30" height="49.61" fill="#c8474d"/><rect x="841.91" y="856.43" width="3.30" height="47.97" fill="#8fd33d"/><rect x="847.52" y="831.42" width="3.30" height="72.98" fill="#5190e0"/><rect x="847.52" y="856.43" width="3.30" height="47.97" fill="#8fd33d"/><rect x="847.52" y="857.25" width="3.30" height="47.15" fill="#c8474d"/><rect x="852.94" y="832.65" width="3.30" height="71.75" fill="#5190e0"/><rect x="852.94" y="856.02" width="3.30" height="48.38" fill="#8fd33d"/><rect x="852.94" y="856.84" width="3.30" height="47.56" fill="#c8474d"/><rect x="864.10" y="831.42" width="3.30" height="72.98" fill="#5190e0"/><rect x="864.10" y="856.43" width="3.30" height="47.97" fill="#8fd33d"/><rect x="864.10" y="857.25" width="3.30" height="47.15" fill="#c8474d"/><rect x="869.70" y="831.42" width="3.30" height="72.98" fill="#5190e0"/><rect x="869.70" y="847.00" width="3.30" height="57.40" fill="#c8474d"/><rect x="869.70" y="855.20" width="3.30" height="49.20" fill="#8fd33d"/><rect x="875.48" y="830.60" width="3.30" height="73.80" fill="#5190e0"/><rect x="875.48" y="856.43" width="3.30" height="47.97" fill="#8fd33d"/><rect x="875.48" y="857.25" width="3.30" height="47.15" fill="#c8474d"/><rect x="881.08" y="833.06" width="3.30" height="71.34" fill="#5190e0"/><rect x="881.08" y="856.43" width="3.30" height="47.97" fill="#8fd33d"/><rect x="881.08" y="857.25" width="3.30" height="47.15" fill="#c8474d"/><rect x="886.51" y="831.83" width="3.30" height="72.57" fill="#5190e0"/><rect x="886.51" y="854.38" width="3.30" height="50.02" fill="#c8474d"/><rect x="886.51" y="856.43" width="3.30" height="47.97" fill="#8fd33d"/><rect x="892.11" y="831.83" width="3.30" height="72.57" fill="#5190e0"/><rect x="892.11" y="856.43" width="3.30" height="47.97" fill="#8fd33d"/><rect x="892.11" y="857.25" width="3.30" height="47.15" fill="#c8474d"/><rect x="897.89" y="832.65" width="3.30" height="71.75" fill="#5190e0"/><rect x="897.89" y="854.79" width="3.30" height="49.61" fill="#8fd33d"/><rect x="897.89" y="858.07" width="3.30" height="46.33" fill="#c8474d"/><rect x="903.84" y="831.83" width="3.30" height="72.57" fill="#5190e0"/><rect x="903.84" y="856.84" width="3.30" height="47.56" fill="#8fd33d"/><rect x="903.84" y="857.66" width="3.30" height="46.74" fill="#c8474d"/><rect x="909.09" y="830.60" width="3.30" height="73.80" fill="#5190e0"/><rect x="909.09" y="855.61" width="3.30" height="48.79" fill="#8fd33d"/><rect x="909.09" y="858.07" width="3.30" height="46.33" fill="#c8474d"/><rect x="914.69" y="828.55" width="3.30" height="75.85" fill="#5190e0"/><rect x="914.69" y="855.20" width="3.30" height="49.20" fill="#8fd33d"/><rect x="914.69" y="858.07" width="3.30" height="46.33" fill="#c8474d"/><rect x="920.29" y="831.83" width="3.30" height="72.57" fill="#5190e0"/><rect x="920.29" y="856.02" width="3.30" height="48.38" fill="#8fd33d"/><rect x="920.29" y="856.84" width="3.30" height="47.56" fill="#c8474d"/><rect x="925.72" y="831.83" width="3.30" height="72.57" fill="#5190e0"/><rect x="925.72" y="856.43" width="3.30" height="47.97" fill="#8fd33d"/><rect x="925.72" y="857.25" width="3.30" height="47.15" fill="#c8474d"/><rect x="931.67" y="832.65" width="3.30" height="71.75" fill="#5190e0"/><rect x="931.67" y="853.15" width="3.30" height="51.25" fill="#c8474d"/><rect x="931.67" y="856.43" width="3.30" height="47.97" fill="#8fd33d"/><rect x="937.97" y="831.42" width="3.30" height="72.98" fill="#5190e0"/><rect x="937.97" y="855.61" width="3.30" height="48.79" fill="#8fd33d"/><rect x="937.97" y="857.25" width="3.30" height="47.15" fill="#c8474d"/><rect x="942.52" y="830.60" width="3.30" height="73.80" fill="#5190e0"/><rect x="942.52" y="855.20" width="3.30" height="49.20" fill="#8fd33d"/><rect x="942.52" y="857.25" width="3.30" height="47.15" fill="#c8474d"/><rect x="948.12" y="832.65" width="3.30" height="71.75" fill="#5190e0"/><rect x="948.12" y="854.79" width="3.30" height="49.61" fill="#c8474d"/><rect x="948.12" y="855.20" width="3.30" height="49.20" fill="#8fd33d"/><rect x="953.90" y="831.42" width="3.30" height="72.98" fill="#5190e0"/><rect x="953.90" y="851.10" width="3.30" height="53.30" fill="#c8474d"/><rect x="953.90" y="854.38" width="3.30" height="50.02" fill="#8fd33d"/><rect x="959.50" y="832.65" width="3.30" height="71.75" fill="#5190e0"/><rect x="959.50" y="856.02" width="3.30" height="48.38" fill="#8fd33d"/><rect x="959.50" y="858.07" width="3.30" height="46.33" fill="#c8474d"/><rect x="967.03" y="833.88" width="3.30" height="70.52" fill="#5190e0"/><rect x="967.03" y="856.43" width="3.30" height="47.97" fill="#8fd33d"/><rect x="967.03" y="858.89" width="3.30" height="45.51" fill="#c8474d"/><rect x="974.03" y="832.24" width="3.30" height="72.16" fill="#5190e0"/><rect x="974.03" y="856.43" width="3.30" height="47.97" fill="#8fd33d"/><rect x="974.03" y="857.25" width="3.30" height="47.15" fill="#c8474d"/><rect x="976.48" y="830.60" width="3.30" height="73.80" fill="#5190e0"/><rect x="976.48" y="855.20" width="3.30" height="49.20" fill="#c8474d"/><rect x="976.48" y="855.20" width="3.30" height="49.20" fill="#8fd33d"/><rect x="982.26" y="831.42" width="3.30" height="72.98" fill="#5190e0"/><rect x="982.26" y="854.38" width="3.30" height="50.02" fill="#c8474d"/><rect x="982.26" y="856.43" width="3.30" height="47.97" fill="#8fd33d"/><rect x="987.86" y="829.78" width="3.30" height="74.62" fill="#5190e0"/><rect x="987.86" y="854.38" width="3.30" height="50.02" fill="#c8474d"/><rect x="987.86" y="856.02" width="3.30" height="48.38" fill="#8fd33d"/><rect x="995.03" y="830.60" width="3.30" height="73.80" fill="#5190e0"/><rect x="995.03" y="855.20" width="3.30" height="49.20" fill="#c8474d"/><rect x="995.03" y="855.20" width="3.30" height="49.20" fill="#8fd33d"/><rect x="998.53" y="831.42" width="3.30" height="72.98" fill="#5190e0"/><rect x="998.53" y="855.20" width="3.30" height="49.20" fill="#c8474d"/><rect x="998.53" y="855.20" width="3.30" height="49.20" fill="#8fd33d"/><rect x="1004.14" y="831.42" width="3.30" height="72.98" fill="#5190e0"/><rect x="1004.14" y="855.20" width="3.30" height="49.20" fill="#c8474d"/><rect x="1004.14" y="856.84" width="3.30" height="47.56" fill="#8fd33d"/><rect x="1011.14" y="834.29" width="3.30" height="70.11" fill="#5190e0"/><rect x="1011.14" y="855.20" width="3.30" height="49.20" fill="#c8474d"/><rect x="1011.14" y="856.02" width="3.30" height="48.38" fill="#8fd33d"/><rect x="1015.51" y="831.42" width="3.30" height="72.98" fill="#5190e0"/><rect x="1015.51" y="854.38" width="3.30" height="50.02" fill="#c8474d"/><rect x="1015.51" y="856.43" width="3.30" height="47.97" fill="#8fd33d"/><rect x="1021.11" y="832.65" width="3.30" height="71.75" fill="#5190e0"/><rect x="1021.11" y="853.56" width="3.30" height="50.84" fill="#c8474d"/><rect x="1021.11" y="856.02" width="3.30" height="48.38" fill="#8fd33d"/><rect x="1026.89" y="831.42" width="3.30" height="72.98" fill="#5190e0"/><rect x="1026.89" y="854.38" width="3.30" height="50.02" fill="#c8474d"/><rect x="1026.89" y="855.20" width="3.30" height="49.20" fill="#8fd33d"/><rect x="1032.49" y="831.42" width="3.30" height="72.98" fill="#5190e0"/><rect x="1032.49" y="855.61" width="3.30" height="48.79" fill="#c8474d"/><rect x="1032.49" y="855.61" width="3.30" height="48.79" fill="#8fd33d"/><rect x="1038.27" y="831.83" width="3.30" height="72.57" fill="#5190e0"/><rect x="1038.27" y="855.61" width="3.30" height="48.79" fill="#c8474d"/><rect x="1038.27" y="855.61" width="3.30" height="48.79" fill="#8fd33d"/><rect x="1043.52" y="831.42" width="3.30" height="72.98" fill="#5190e0"/><rect x="1043.52" y="855.20" width="3.30" height="49.20" fill="#8fd33d"/><rect x="1043.52" y="855.20" width="3.30" height="49.20" fill="#c8474d"/><rect x="1052.62" y="831.83" width="3.30" height="72.57" fill="#5190e0"/><rect x="1052.62" y="854.38" width="3.30" height="50.02" fill="#c8474d"/><rect x="1052.62" y="856.02" width="3.30" height="48.38" fill="#8fd33d"/><rect x="1055.25" y="830.60" width="3.30" height="73.80" fill="#5190e0"/><rect x="1055.25" y="854.38" width="3.30" height="50.02" fill="#c8474d"/><rect x="1055.25" y="856.02" width="3.30" height="48.38" fill="#8fd33d"/><rect x="1060.50" y="830.60" width="3.30" height="73.80" fill="#5190e0"/><rect x="1060.50" y="854.38" width="3.30" height="50.02" fill="#c8474d"/><rect x="1060.50" y="856.43" width="3.30" height="47.97" fill="#8fd33d"/><rect x="1065.92" y="832.65" width="3.30" height="71.75" fill="#5190e0"/><rect x="1065.92" y="855.20" width="3.30" height="49.20" fill="#8fd33d"/><rect x="1065.92" y="857.25" width="3.30" height="47.15" fill="#c8474d"/><rect x="1071.53" y="831.42" width="3.30" height="72.98" fill="#5190e0"/><rect x="1071.53" y="855.20" width="3.30" height="49.20" fill="#c8474d"/><rect x="1071.53" y="856.43" width="3.30" height="47.97" fill="#8fd33d"/><rect x="1081.15" y="831.83" width="3.30" height="72.57" fill="#5190e0"/><rect x="1081.15" y="855.20" width="3.30" height="49.20" fill="#c8474d"/><rect x="1081.15" y="856.43" width="3.30" height="47.97" fill="#8fd33d"/><rect x="1082.90" y="831.42" width="3.30" height="72.98" fill="#5190e0"/><rect x="1082.90" y="854.38" width="3.30" height="50.02" fill="#c8474d"/><rect x="1082.90" y="856.43" width="3.30" height="47.97" fill="#8fd33d"/><rect x="1090.78" y="833.47" width="3.30" height="70.93" fill="#5190e0"/><rect x="1090.78" y="855.20" width="3.30" height="49.20" fill="#8fd33d"/><rect x="1090.78" y="860.12" width="3.30" height="44.28" fill="#c8474d"/><rect x="1094.28" y="831.42" width="3.30" height="72.98" fill="#5190e0"/><rect x="1094.28" y="854.38" width="3.30" height="50.02" fill="#c8474d"/><rect x="1094.28" y="856.02" width="3.30" height="48.38" fill="#8fd33d"/><rect x="1099.88" y="832.65" width="3.30" height="71.75" fill="#5190e0"/><rect x="1099.88" y="855.20" width="3.30" height="49.20" fill="#c8474d"/><rect x="1099.88" y="856.02" width="3.30" height="48.38" fill="#8fd33d"/><rect x="1105.31" y="832.65" width="3.30" height="71.75" fill="#5190e0"/><rect x="1105.31" y="855.20" width="3.30" height="49.20" fill="#c8474d"/><rect x="1105.31" y="856.02" width="3.30" height="48.38" fill="#8fd33d"/><rect x="1110.91" y="828.55" width="3.30" height="75.85" fill="#5190e0"/><rect x="1110.91" y="854.79" width="3.30" height="49.61" fill="#c8474d"/><rect x="1110.91" y="856.02" width="3.30" height="48.38" fill="#8fd33d"/><rect x="1116.51" y="830.60" width="3.30" height="73.80" fill="#5190e0"/><rect x="1116.51" y="855.20" width="3.30" height="49.20" fill="#c8474d"/><rect x="1116.51" y="856.02" width="3.30" height="48.38" fill="#8fd33d"/><rect x="1124.39" y="830.60" width="3.30" height="73.80" fill="#5190e0"/><rect x="1124.39" y="856.02" width="3.30" height="48.38" fill="#8fd33d"/><rect x="1124.39" y="859.30" width="3.30" height="45.10" fill="#c8474d"/><rect x="1127.89" y="831.83" width="3.30" height="72.57" fill="#5190e0"/><rect x="1127.89" y="854.38" width="3.30" height="50.02" fill="#8fd33d"/><rect x="1127.89" y="855.20" width="3.30" height="49.20" fill="#c8474d"/><rect x="1138.92" y="831.42" width="3.30" height="72.98" fill="#5190e0"/><rect x="1138.92" y="855.20" width="3.30" height="49.20" fill="#c8474d"/><rect x="1138.92" y="856.43" width="3.30" height="47.97" fill="#8fd33d"/><rect x="1144.52" y="831.01" width="3.30" height="73.39" fill="#5190e0"/><rect x="1144.52" y="853.56" width="3.30" height="50.84" fill="#c8474d"/><rect x="1144.52" y="856.02" width="3.30" height="48.38" fill="#8fd33d"/><rect x="1150.16" y="831.83" width="3.30" height="72.57" fill="#5190e0"/><rect x="1150.16" y="854.38" width="3.30" height="50.02" fill="#c8474d"/><rect x="1150.16" y="855.20" width="3.30" height="49.20" fill="#8fd33d"/><rect x="1158.30" y="830.60" width="3.30" height="73.80" fill="#5190e0"/><rect x="1158.30" y="855.20" width="3.30" height="49.20" fill="#c8474d"/><rect x="1158.30" y="856.02" width="3.30" height="48.38" fill="#8fd33d"/><rect x="1161.55" y="831.01" width="3.30" height="73.39" fill="#5190e0"/><rect x="1161.55" y="854.38" width="3.30" height="50.02" fill="#c8474d"/><rect x="1161.55" y="855.20" width="3.30" height="49.20" fill="#8fd33d"/><rect x="1166.98" y="830.60" width="3.30" height="73.80" fill="#5190e0"/><rect x="1166.98" y="854.79" width="3.30" height="49.61" fill="#c8474d"/><rect x="1166.98" y="856.02" width="3.30" height="48.38" fill="#8fd33d"/><rect x="1176.38" y="832.65" width="3.30" height="71.75" fill="#5190e0"/><rect x="1176.38" y="855.20" width="3.30" height="49.20" fill="#c8474d"/><rect x="1176.38" y="856.84" width="3.30" height="47.56" fill="#8fd33d"/><rect x="1180.00" y="832.65" width="3.30" height="71.75" fill="#5190e0"/><rect x="1180.00" y="855.20" width="3.30" height="49.20" fill="#c8474d"/><rect x="1180.00" y="856.43" width="3.30" height="47.97" fill="#8fd33d"/><rect x="1183.98" y="831.42" width="3.30" height="72.98" fill="#5190e0"/><rect x="1183.98" y="856.02" width="3.30" height="48.38" fill="#8fd33d"/><rect x="1183.98" y="856.02" width="3.30" height="48.38" fill="#c8474d"/><rect x="1191.40" y="828.55" width="3.30" height="75.85" fill="#5190e0"/><rect x="1191.40" y="855.20" width="3.30" height="49.20" fill="#c8474d"/><rect x="1191.40" y="856.43" width="3.30" height="47.97" fill="#8fd33d"/><rect x="1196.28" y="831.83" width="3.30" height="72.57" fill="#5190e0"/><rect x="1196.28" y="855.20" width="3.30" height="49.20" fill="#c8474d"/><rect x="1196.28" y="857.25" width="3.30" height="47.15" fill="#8fd33d"/><rect x="1200.80" y="828.96" width="3.30" height="75.44" fill="#5190e0"/><rect x="1200.80" y="855.61" width="3.30" height="48.79" fill="#8fd33d"/><rect x="1200.80" y="856.84" width="3.30" height="47.56" fill="#c8474d"/><rect x="1206.23" y="831.83" width="3.30" height="72.57" fill="#5190e0"/><rect x="1206.23" y="854.38" width="3.30" height="50.02" fill="#c8474d"/><rect x="1206.23" y="856.02" width="3.30" height="48.38" fill="#8fd33d"/><rect x="1214.00" y="832.65" width="3.30" height="71.75" fill="#5190e0"/><rect x="1214.00" y="854.79" width="3.30" height="49.61" fill="#c8474d"/><rect x="1214.00" y="856.02" width="3.30" height="48.38" fill="#8fd33d"/><rect x="1217.62" y="831.42" width="3.30" height="72.98" fill="#5190e0"/><rect x="1217.62" y="856.84" width="3.30" height="47.56" fill="#8fd33d"/><rect x="1217.62" y="858.48" width="3.30" height="45.92" fill="#c8474d"/><rect x="1223.05" y="827.32" width="3.30" height="77.08" fill="#5190e0"/><rect x="1223.05" y="847.82" width="3.30" height="56.58" fill="#c8474d"/><rect x="1223.05" y="853.15" width="3.30" height="51.25" fill="#8fd33d"/><rect x="1228.83" y="830.60" width="3.30" height="73.80" fill="#5190e0"/><rect x="1228.83" y="857.25" width="3.30" height="47.15" fill="#8fd33d"/><rect x="1228.83" y="859.30" width="3.30" height="45.10" fill="#c8474d"/><rect x="1234.62" y="831.83" width="3.30" height="72.57" fill="#5190e0"/><rect x="1234.62" y="856.43" width="3.30" height="47.97" fill="#8fd33d"/><rect x="1234.62" y="858.48" width="3.30" height="45.92" fill="#c8474d"/><rect x="1240.95" y="831.01" width="3.30" height="73.39" fill="#5190e0"/><rect x="1240.95" y="856.43" width="3.30" height="47.97" fill="#8fd33d"/><rect x="1240.95" y="856.84" width="3.30" height="47.56" fill="#c8474d"/><rect x="1245.47" y="830.60" width="3.30" height="73.80" fill="#5190e0"/><rect x="1245.47" y="856.43" width="3.30" height="47.97" fill="#8fd33d"/><rect x="1245.47" y="856.84" width="3.30" height="47.56" fill="#c8474d"/><rect x="1251.08" y="827.73" width="3.30" height="76.67" fill="#5190e0"/><rect x="1251.08" y="855.61" width="3.30" height="48.79" fill="#8fd33d"/><rect x="1251.08" y="857.25" width="3.30" height="47.15" fill="#c8474d"/><rect x="1256.87" y="831.42" width="3.30" height="72.98" fill="#5190e0"/><rect x="1256.87" y="856.02" width="3.30" height="48.38" fill="#c8474d"/><rect x="1256.87" y="856.84" width="3.30" height="47.56" fill="#8fd33d"/><rect x="1262.29" y="830.60" width="3.30" height="73.80" fill="#5190e0"/><rect x="1262.29" y="855.61" width="3.30" height="48.79" fill="#8fd33d"/><rect x="1262.29" y="856.43" width="3.30" height="47.97" fill="#c8474d"/><rect x="1267.72" y="830.60" width="3.30" height="73.80" fill="#5190e0"/><rect x="1267.72" y="855.61" width="3.30" height="48.79" fill="#8fd33d"/><rect x="1267.72" y="855.61" width="3.30" height="48.79" fill="#c8474d"/><rect x="1274.05" y="829.78" width="3.30" height="74.62" fill="#5190e0"/><rect x="1274.05" y="855.20" width="3.30" height="49.20" fill="#8fd33d"/><rect x="1274.05" y="856.84" width="3.30" height="47.56" fill="#c8474d"/><rect x="1278.93" y="829.78" width="3.30" height="74.62" fill="#5190e0"/><rect x="1278.93" y="855.20" width="3.30" height="49.20" fill="#8fd33d"/><rect x="1278.93" y="856.43" width="3.30" height="47.97" fill="#c8474d"/><rect x="1284.72" y="830.60" width="3.30" height="73.80" fill="#5190e0"/><rect x="1284.72" y="855.61" width="3.30" height="48.79" fill="#c8474d"/><rect x="1284.72" y="856.43" width="3.30" height="47.97" fill="#8fd33d"/><rect x="1293.04" y="831.83" width="3.30" height="72.57" fill="#5190e0"/><rect x="1293.04" y="856.02" width="3.30" height="48.38" fill="#8fd33d"/><rect x="1293.04" y="856.84" width="3.30" height="47.56" fill="#c8474d"/><rect x="1296.12" y="828.14" width="3.30" height="76.26" fill="#5190e0"/><rect x="1296.12" y="856.43" width="3.30" height="47.97" fill="#8fd33d"/><rect x="1296.12" y="856.43" width="3.30" height="47.97" fill="#c8474d"/><rect x="1301.72" y="828.96" width="3.30" height="75.44" fill="#5190e0"/><rect x="1301.72" y="854.38" width="3.30" height="50.02" fill="#c8474d"/><rect x="1301.72" y="856.43" width="3.30" height="47.97" fill="#8fd33d"/><rect x="1307.51" y="829.78" width="3.30" height="74.62" fill="#5190e0"/><rect x="1307.51" y="856.43" width="3.30" height="47.97" fill="#c8474d"/><rect x="1307.51" y="857.25" width="3.30" height="47.15" fill="#8fd33d"/><rect x="1312.94" y="830.60" width="3.30" height="73.80" fill="#5190e0"/><rect x="1312.94" y="855.61" width="3.30" height="48.79" fill="#c8474d"/><rect x="1312.94" y="856.43" width="3.30" height="47.97" fill="#8fd33d"/><rect x="1322.16" y="830.60" width="3.30" height="73.80" fill="#5190e0"/><rect x="1322.16" y="854.38" width="3.30" height="50.02" fill="#c8474d"/><rect x="1322.16" y="856.43" width="3.30" height="47.97" fill="#8fd33d"/><rect x="1324.33" y="829.78" width="3.30" height="74.62" fill="#5190e0"/><rect x="1324.33" y="854.38" width="3.30" height="50.02" fill="#c8474d"/><rect x="1324.33" y="856.43" width="3.30" height="47.97" fill="#8fd33d"/><rect x="1329.76" y="831.42" width="3.30" height="72.98" fill="#5190e0"/><rect x="1329.76" y="855.20" width="3.30" height="49.20" fill="#c8474d"/><rect x="1329.76" y="855.20" width="3.30" height="49.20" fill="#8fd33d"/><rect x="1335.54" y="831.01" width="3.30" height="73.39" fill="#5190e0"/><rect x="1335.54" y="852.74" width="3.30" height="51.66" fill="#c8474d"/><rect x="1335.54" y="854.38" width="3.30" height="50.02" fill="#8fd33d"/><rect x="1340.97" y="832.65" width="3.30" height="71.75" fill="#5190e0"/><rect x="1340.97" y="855.20" width="3.30" height="49.20" fill="#c8474d"/><rect x="1340.97" y="855.61" width="3.30" height="48.79" fill="#8fd33d"/><rect x="1346.40" y="829.78" width="3.30" height="74.62" fill="#5190e0"/><rect x="1346.40" y="852.33" width="3.30" height="52.07" fill="#c8474d"/><rect x="1346.40" y="856.02" width="3.30" height="48.38" fill="#8fd33d"/><rect x="1352.18" y="828.55" width="3.30" height="75.85" fill="#5190e0"/><rect x="1352.18" y="851.51" width="3.30" height="52.89" fill="#c8474d"/><rect x="1352.18" y="852.33" width="3.30" height="52.07" fill="#8fd33d"/><rect x="1357.79" y="831.42" width="3.30" height="72.98" fill="#5190e0"/><rect x="1357.79" y="854.38" width="3.30" height="50.02" fill="#c8474d"/><rect x="1357.79" y="856.02" width="3.30" height="48.38" fill="#8fd33d"/><rect x="1363.58" y="831.83" width="3.30" height="72.57" fill="#5190e0"/><rect x="1363.58" y="854.38" width="3.30" height="50.02" fill="#c8474d"/><rect x="1363.58" y="856.84" width="3.30" height="47.56" fill="#8fd33d"/><rect x="1369.55" y="831.83" width="3.30" height="72.57" fill="#5190e0"/><rect x="1369.55" y="855.20" width="3.30" height="49.20" fill="#c8474d"/><rect x="1369.55" y="856.02" width="3.30" height="48.38" fill="#8fd33d"/><rect x="1374.43" y="831.01" width="3.30" height="73.39" fill="#5190e0"/><rect x="1374.43" y="854.38" width="3.30" height="50.02" fill="#c8474d"/><rect x="1374.43" y="855.20" width="3.30" height="49.20" fill="#8fd33d"/><rect x="1380.22" y="827.32" width="3.30" height="77.08" fill="#5190e0"/><rect x="1380.22" y="854.79" width="3.30" height="49.61" fill="#c8474d"/><rect x="1380.22" y="856.02" width="3.30" height="48.38" fill="#8fd33d"/><rect x="1386.55" y="832.24" width="3.30" height="72.16" fill="#5190e0"/><rect x="1386.55" y="853.56" width="3.30" height="50.84" fill="#c8474d"/><rect x="1386.55" y="855.20" width="3.30" height="49.20" fill="#8fd33d"/><rect x="1391.61" y="831.01" width="3.30" height="73.39" fill="#5190e0"/><rect x="1391.61" y="854.38" width="3.30" height="50.02" fill="#c8474d"/><rect x="1391.61" y="854.79" width="3.30" height="49.61" fill="#8fd33d"/><rect x="1397.04" y="831.42" width="3.30" height="72.98" fill="#5190e0"/><rect x="1397.04" y="854.79" width="3.30" height="49.61" fill="#c8474d"/><rect x="1397.04" y="855.20" width="3.30" height="49.20" fill="#8fd33d"/><rect x="1402.46" y="830.60" width="3.30" height="73.80" fill="#5190e0"/><rect x="1402.46" y="854.38" width="3.30" height="50.02" fill="#c8474d"/><rect x="1402.46" y="855.61" width="3.30" height="48.79" fill="#8fd33d"/><rect x="1408.25" y="830.60" width="3.30" height="73.80" fill="#5190e0"/><rect x="1408.25" y="854.79" width="3.30" height="49.61" fill="#c8474d"/><rect x="1408.25" y="855.61" width="3.30" height="48.79" fill="#8fd33d"/><rect x="1413.86" y="828.96" width="3.30" height="75.44" fill="#5190e0"/><rect x="1413.86" y="854.79" width="3.30" height="49.61" fill="#c8474d"/><rect x="1413.86" y="855.20" width="3.30" height="49.20" fill="#8fd33d"/><rect x="1422.36" y="829.78" width="3.30" height="74.62" fill="#5190e0"/><rect x="1422.36" y="855.20" width="3.30" height="49.20" fill="#c8474d"/><rect x="1422.36" y="856.43" width="3.30" height="47.97" fill="#8fd33d"/><rect x="1424.71" y="829.78" width="3.30" height="74.62" fill="#5190e0"/><rect x="1424.71" y="854.38" width="3.30" height="50.02" fill="#c8474d"/><rect x="1424.71" y="855.61" width="3.30" height="48.79" fill="#8fd33d"/><rect x="1430.50" y="831.01" width="3.30" height="73.39" fill="#5190e0"/><rect x="1430.50" y="855.20" width="3.30" height="49.20" fill="#c8474d"/><rect x="1430.50" y="855.20" width="3.30" height="49.20" fill="#8fd33d"/><rect x="1435.92" y="828.55" width="3.30" height="75.85" fill="#5190e0"/><rect x="1435.92" y="854.38" width="3.30" height="50.02" fill="#c8474d"/><rect x="1435.92" y="856.43" width="3.30" height="47.97" fill="#8fd33d"/><rect x="1441.71" y="831.01" width="3.30" height="73.39" fill="#5190e0"/><rect x="1441.71" y="853.15" width="3.30" height="51.25" fill="#c8474d"/><rect x="1441.71" y="854.38" width="3.30" height="50.02" fill="#8fd33d"/><rect x="1450.03" y="829.78" width="3.30" height="74.62" fill="#5190e0"/><rect x="1450.03" y="852.74" width="3.30" height="51.66" fill="#c8474d"/><rect x="1450.03" y="854.38" width="3.30" height="50.02" fill="#8fd33d"/><rect x="317.0" y="903.90" width="1137.0" height="1" fill="#000" fill-opacity="0.385"/><rect x="317.0" y="862.90" width="1137.0" height="1" fill="#000" fill-opacity="0.385"/><rect x="317.0" y="821.90" width="1137.0" height="1" fill="#000" fill-opacity="0.385"/><rect x="317.0" y="780.90" width="1137.0" height="1" fill="#000" fill-opacity="0.385"/><rect x="317.0" y="739.90" width="1137.0" height="1" fill="#000" fill-opacity="0.385"/><rect x="317.0" y="698.90" width="1137.0" height="1" fill="#000" fill-opacity="0.385"/><rect x="317.0" y="657.90" width="1137.0" height="1" fill="#000" fill-opacity="0.385"/><rect x="317.0" y="616.90" width="1137.0" height="1" fill="#000" fill-opacity="0.385"/><rect x="317.0" y="575.90" width="1137.0" height="1" fill="#000" fill-opacity="0.385"/><rect x="317.0" y="534.90" width="1137.0" height="1" fill="#000" fill-opacity="0.385"/><rect x="317.0" y="493.90" width="1137.0" height="1" fill="#000" fill-opacity="0.385"/><rect x="375.00" y="494.4" width="1" height="410.0" fill="#000" fill-opacity="0.385"/><rect x="456.15" y="494.4" width="1" height="410.0" fill="#000" fill-opacity="0.385"/><rect x="537.30" y="494.4" width="1" height="410.0" fill="#000" fill-opacity="0.385"/><rect x="618.45" y="494.4" width="1" height="410.0" fill="#000" fill-opacity="0.385"/><rect x="699.60" y="494.4" width="1" height="410.0" fill="#000" fill-opacity="0.385"/><rect x="780.75" y="494.4" width="1" height="410.0" fill="#000" fill-opacity="0.385"/><rect x="861.90" y="494.4" width="1" height="410.0" fill="#000" fill-opacity="0.385"/><rect x="943.05" y="494.4" width="1" height="410.0" fill="#000" fill-opacity="0.385"/><rect x="1024.20" y="494.4" width="1" height="410.0" fill="#000" fill-opacity="0.385"/><rect x="1105.35" y="494.4" width="1" height="410.0" fill="#000" fill-opacity="0.385"/><rect x="1186.50" y="494.4" width="1" height="410.0" fill="#000" fill-opacity="0.385"/><rect x="1267.65" y="494.4" width="1" height="410.0" fill="#000" fill-opacity="0.385"/><rect x="1348.80" y="494.4" width="1" height="410.0" fill="#000" fill-opacity="0.385"/><rect x="1429.95" y="494.4" width="1" height="410.0" fill="#000" fill-opacity="0.385"/><text x="314.2" y="908.2" font-size="9.6" text-anchor="end" fill="#111">0</text><text x="314.2" y="867.2" font-size="9.6" text-anchor="end" fill="#111">1</text><text x="314.2" y="826.2" font-size="9.6" text-anchor="end" fill="#111">2</text><text x="314.2" y="785.2" font-size="9.6" text-anchor="end" fill="#111">3</text><text x="314.2" y="744.2" font-size="9.6" text-anchor="end" fill="#111">4</text><text x="314.2" y="703.2" font-size="9.6" text-anchor="end" fill="#111">5</text><text x="314.2" y="662.2" font-size="9.6" text-anchor="end" fill="#111">6</text><text x="314.2" y="621.2" font-size="9.6" text-anchor="end" fill="#111">7</text><text x="314.2" y="580.2" font-size="9.6" text-anchor="end" fill="#111">8</text><text x="314.2" y="539.2" font-size="9.6" text-anchor="end" fill="#111">9</text><text x="314.2" y="498.2" font-size="9.6" text-anchor="end" fill="#111">10</text><text x="375.5" y="914.4" font-size="9.7" text-anchor="middle" fill="#111">12:00</text><text x="456.6" y="914.4" font-size="9.7" text-anchor="middle" fill="#111">Thu 23</text><text x="537.8" y="914.4" font-size="9.7" text-anchor="middle" fill="#111">12:00</text><text x="619.0" y="914.4" font-size="9.7" text-anchor="middle" fill="#111">Fri 24</text><text x="700.1" y="914.4" font-size="9.7" text-anchor="middle" fill="#111">12:00</text><text x="781.2" y="914.4" font-size="9.7" text-anchor="middle" fill="#111">Sat 25</text><text x="862.4" y="914.4" font-size="9.7" text-anchor="middle" fill="#111">12:00</text><text x="943.6" y="914.4" font-size="9.7" text-anchor="middle" fill="#111">Feb 26</text><text x="1024.7" y="914.4" font-size="9.7" text-anchor="middle" fill="#111">12:00</text><text x="1105.8" y="914.4" font-size="9.7" text-anchor="middle" fill="#111">Mon 27</text><text x="1187.0" y="914.4" font-size="9.7" text-anchor="middle" fill="#111">12:00</text><text x="1268.2" y="914.4" font-size="9.7" text-anchor="middle" fill="#111">Tue 28</text><text x="1349.3" y="914.4" font-size="9.7" text-anchor="middle" fill="#111">12:00</text><text x="1430.5" y="914.4" font-size="9.7" text-anchor="middle" fill="#111">March</text><path d="M317.5 919 V923 H319.3" fill="none" stroke="#222" stroke-width="1"/><path d="M1453.6 919 V923" fill="none" stroke="#222" stroke-width="1"/><rect x="1251.6" y="494.9" width="200.6" height="105.5" fill="#fff" fill-opacity="0.5"/><rect x="1254.2" y="505.8" width="7.8" height="7.6" fill="#c8474d"/><rect x="1254.2" y="525.9" width="7.8" height="7.6" fill="#8fd33d"/><rect x="1254.2" y="546.0" width="7.8" height="7.6" fill="#5190e0"/><rect x="1254.2" y="566.1" width="7.8" height="7.6" fill="#f29bb9"/><rect x="1254.2" y="586.2" width="7.8" height="7.6" fill="#c9c9c9"/><rect x="985.2" y="939" width="20.6" height="59.6" fill="#d5d5d5"/><rect x="340.48" y="997.60" width="2.00" height="1.00" fill="#5190e0"/><rect x="343.59" y="997.60" width="2.00" height="1.00" fill="#5190e0"/><rect x="346.70" y="939.00" width="3.01" height="59.60" fill="#5190e0"/><rect x="346.70" y="971.60" width="3.01" height="27.00" fill="#c8474d"/><rect x="346.70" y="986.60" width="3.01" height="12.00" fill="#5190e0"/><rect x="346.70" y="993.60" width="3.01" height="5.00" fill="#8fd33d"/><rect x="349.81" y="995.38" width="2.81" height="3.22" fill="#5190e0"/><rect x="349.81" y="996.40" width="2.81" height="2.20" fill="#8fd33d"/><rect x="349.81" y="997.30" width="2.81" height="1.30" fill="#c8474d"/><rect x="352.92" y="995.20" width="2.81" height="3.40" fill="#5190e0"/><rect x="352.92" y="996.40" width="2.81" height="2.20" fill="#8fd33d"/><rect x="352.92" y="997.30" width="2.81" height="1.30" fill="#c8474d"/><rect x="356.03" y="995.26" width="2.81" height="3.34" fill="#5190e0"/><rect x="356.03" y="996.40" width="2.81" height="2.20" fill="#8fd33d"/><rect x="356.03" y="997.30" width="2.81" height="1.30" fill="#c8474d"/><rect x="359.14" y="995.06" width="2.81" height="3.54" fill="#5190e0"/><rect x="359.14" y="996.40" width="2.81" height="2.20" fill="#c8474d"/><rect x="359.14" y="997.60" width="2.81" height="1.00" fill="#8fd33d"/><rect x="368.47" y="995.35" width="2.81" height="3.25" fill="#5190e0"/><rect x="368.47" y="996.40" width="2.81" height="2.20" fill="#8fd33d"/><rect x="368.47" y="997.30" width="2.81" height="1.30" fill="#c8474d"/><rect x="371.58" y="987.60" width="3.01" height="11.00" fill="#c8474d"/><rect x="371.58" y="990.60" width="3.01" height="8.00" fill="#8fd33d"/><rect x="371.58" y="995.60" width="3.01" height="3.00" fill="#5190e0"/><rect x="374.69" y="939.00" width="3.01" height="59.60" fill="#c8474d"/><rect x="374.69" y="995.60" width="3.01" height="3.00" fill="#5190e0"/><rect x="377.80" y="995.75" width="2.81" height="2.85" fill="#5190e0"/><rect x="377.80" y="996.40" width="2.81" height="2.20" fill="#c8474d"/><rect x="377.80" y="997.60" width="2.81" height="1.00" fill="#8fd33d"/><rect x="380.91" y="995.46" width="2.81" height="3.14" fill="#5190e0"/><rect x="380.91" y="996.40" width="2.81" height="2.20" fill="#8fd33d"/><rect x="380.91" y="997.30" width="2.81" height="1.30" fill="#c8474d"/><rect x="384.02" y="995.72" width="2.81" height="2.88" fill="#5190e0"/><rect x="384.02" y="996.40" width="2.81" height="2.20" fill="#c8474d"/><rect x="384.02" y="997.60" width="2.81" height="1.00" fill="#8fd33d"/><rect x="387.13" y="995.08" width="2.81" height="3.52" fill="#5190e0"/><rect x="387.13" y="996.40" width="2.81" height="2.20" fill="#8fd33d"/><rect x="387.13" y="997.30" width="2.81" height="1.30" fill="#c8474d"/><rect x="390.24" y="995.84" width="2.81" height="2.76" fill="#5190e0"/><rect x="390.24" y="996.40" width="2.81" height="2.20" fill="#8fd33d"/><rect x="390.24" y="997.30" width="2.81" height="1.30" fill="#c8474d"/><rect x="393.35" y="995.86" width="2.81" height="2.74" fill="#5190e0"/><rect x="393.35" y="996.40" width="2.81" height="2.20" fill="#8fd33d"/><rect x="393.35" y="997.30" width="2.81" height="1.30" fill="#c8474d"/><rect x="396.46" y="995.13" width="2.81" height="3.47" fill="#5190e0"/><rect x="396.46" y="996.40" width="2.81" height="2.20" fill="#c8474d"/><rect x="396.46" y="997.60" width="2.81" height="1.00" fill="#8fd33d"/><rect x="399.57" y="995.02" width="2.81" height="3.58" fill="#5190e0"/><rect x="399.57" y="996.40" width="2.81" height="2.20" fill="#c8474d"/><rect x="399.57" y="997.60" width="2.81" height="1.00" fill="#8fd33d"/><rect x="402.68" y="995.04" width="2.81" height="3.56" fill="#5190e0"/><rect x="402.68" y="996.40" width="2.81" height="2.20" fill="#c8474d"/><rect x="402.68" y="997.60" width="2.81" height="1.00" fill="#8fd33d"/><rect x="405.79" y="995.46" width="2.81" height="3.14" fill="#5190e0"/><rect x="405.79" y="996.40" width="2.81" height="2.20" fill="#8fd33d"/><rect x="405.79" y="997.30" width="2.81" height="1.30" fill="#c8474d"/><rect x="408.90" y="995.80" width="2.81" height="2.80" fill="#5190e0"/><rect x="408.90" y="996.40" width="2.81" height="2.20" fill="#8fd33d"/><rect x="408.90" y="997.30" width="2.81" height="1.30" fill="#c8474d"/><rect x="415.12" y="995.31" width="2.81" height="3.29" fill="#5190e0"/><rect x="415.12" y="996.40" width="2.81" height="2.20" fill="#8fd33d"/><rect x="415.12" y="997.30" width="2.81" height="1.30" fill="#c8474d"/><rect x="418.23" y="939.00" width="3.01" height="59.60" fill="#5190e0"/><rect x="418.23" y="996.60" width="3.01" height="2.00" fill="#c8474d"/><rect x="421.34" y="995.64" width="2.81" height="2.96" fill="#5190e0"/><rect x="421.34" y="996.40" width="2.81" height="2.20" fill="#c8474d"/><rect x="421.34" y="997.60" width="2.81" height="1.00" fill="#8fd33d"/><rect x="427.56" y="995.93" width="2.81" height="2.67" fill="#5190e0"/><rect x="427.56" y="996.40" width="2.81" height="2.20" fill="#c8474d"/><rect x="427.56" y="997.60" width="2.81" height="1.00" fill="#8fd33d"/><rect x="430.67" y="995.70" width="2.81" height="2.90" fill="#5190e0"/><rect x="430.67" y="996.40" width="2.81" height="2.20" fill="#8fd33d"/><rect x="430.67" y="997.30" width="2.81" height="1.30" fill="#c8474d"/><rect x="433.78" y="996.00" width="2.81" height="2.60" fill="#5190e0"/><rect x="433.78" y="996.40" width="2.81" height="2.20" fill="#8fd33d"/><rect x="433.78" y="997.30" width="2.81" height="1.30" fill="#c8474d"/><rect x="436.89" y="995.18" width="2.81" height="3.42" fill="#5190e0"/><rect x="436.89" y="996.40" width="2.81" height="2.20" fill="#c8474d"/><rect x="436.89" y="997.60" width="2.81" height="1.00" fill="#8fd33d"/><rect x="440.00" y="995.52" width="2.81" height="3.08" fill="#5190e0"/><rect x="440.00" y="996.40" width="2.81" height="2.20" fill="#c8474d"/><rect x="440.00" y="997.60" width="2.81" height="1.00" fill="#8fd33d"/><rect x="443.11" y="995.02" width="2.81" height="3.58" fill="#5190e0"/><rect x="443.11" y="996.40" width="2.81" height="2.20" fill="#c8474d"/><rect x="443.11" y="997.60" width="2.81" height="1.00" fill="#8fd33d"/><rect x="446.22" y="995.98" width="2.81" height="2.62" fill="#5190e0"/><rect x="446.22" y="996.40" width="2.81" height="2.20" fill="#8fd33d"/><rect x="446.22" y="997.30" width="2.81" height="1.30" fill="#c8474d"/><rect x="449.33" y="995.21" width="2.81" height="3.39" fill="#5190e0"/><rect x="449.33" y="996.40" width="2.81" height="2.20" fill="#c8474d"/><rect x="449.33" y="997.60" width="2.81" height="1.00" fill="#8fd33d"/><rect x="452.44" y="992.60" width="3.01" height="6.00" fill="#c8474d"/><rect x="452.44" y="993.60" width="3.01" height="5.00" fill="#8fd33d"/><rect x="452.44" y="995.60" width="3.01" height="3.00" fill="#5190e0"/><rect x="455.55" y="995.63" width="2.81" height="2.97" fill="#5190e0"/><rect x="455.55" y="996.40" width="2.81" height="2.20" fill="#8fd33d"/><rect x="455.55" y="997.30" width="2.81" height="1.30" fill="#c8474d"/><rect x="458.66" y="995.82" width="2.81" height="2.78" fill="#5190e0"/><rect x="458.66" y="996.40" width="2.81" height="2.20" fill="#c8474d"/><rect x="458.66" y="997.60" width="2.81" height="1.00" fill="#8fd33d"/><rect x="464.88" y="995.24" width="2.81" height="3.36" fill="#5190e0"/><rect x="464.88" y="996.40" width="2.81" height="2.20" fill="#c8474d"/><rect x="464.88" y="997.60" width="2.81" height="1.00" fill="#8fd33d"/><rect x="467.99" y="995.07" width="2.81" height="3.53" fill="#5190e0"/><rect x="467.99" y="996.40" width="2.81" height="2.20" fill="#8fd33d"/><rect x="467.99" y="997.30" width="2.81" height="1.30" fill="#c8474d"/><rect x="471.10" y="995.48" width="2.81" height="3.12" fill="#5190e0"/><rect x="471.10" y="996.40" width="2.81" height="2.20" fill="#c8474d"/><rect x="471.10" y="997.60" width="2.81" height="1.00" fill="#8fd33d"/><rect x="474.21" y="995.25" width="2.81" height="3.35" fill="#5190e0"/><rect x="474.21" y="996.40" width="2.81" height="2.20" fill="#c8474d"/><rect x="474.21" y="997.60" width="2.81" height="1.00" fill="#8fd33d"/><rect x="477.32" y="991.60" width="3.01" height="7.00" fill="#c8474d"/><rect x="477.32" y="995.60" width="3.01" height="3.00" fill="#5190e0"/><rect x="480.43" y="979.60" width="3.01" height="19.00" fill="#c8474d"/><rect x="480.43" y="983.60" width="3.01" height="15.00" fill="#8fd33d"/><rect x="480.43" y="993.60" width="3.01" height="5.00" fill="#5190e0"/><rect x="483.54" y="995.20" width="2.81" height="3.40" fill="#5190e0"/><rect x="483.54" y="996.40" width="2.81" height="2.20" fill="#8fd33d"/><rect x="483.54" y="997.30" width="2.81" height="1.30" fill="#c8474d"/><rect x="486.65" y="981.60" width="3.01" height="17.00" fill="#c8474d"/><rect x="486.65" y="988.60" width="3.01" height="10.00" fill="#8fd33d"/><rect x="486.65" y="995.60" width="3.01" height="3.00" fill="#5190e0"/><rect x="489.76" y="995.96" width="2.81" height="2.64" fill="#5190e0"/><rect x="489.76" y="996.40" width="2.81" height="2.20" fill="#8fd33d"/><rect x="489.76" y="997.30" width="2.81" height="1.30" fill="#c8474d"/><rect x="492.87" y="995.39" width="2.81" height="3.21" fill="#5190e0"/><rect x="492.87" y="996.40" width="2.81" height="2.20" fill="#c8474d"/><rect x="492.87" y="997.60" width="2.81" height="1.00" fill="#8fd33d"/><rect x="495.98" y="995.08" width="2.81" height="3.52" fill="#5190e0"/><rect x="495.98" y="996.40" width="2.81" height="2.20" fill="#c8474d"/><rect x="495.98" y="997.60" width="2.81" height="1.00" fill="#8fd33d"/><rect x="499.09" y="995.68" width="2.81" height="2.92" fill="#5190e0"/><rect x="499.09" y="996.40" width="2.81" height="2.20" fill="#c8474d"/><rect x="499.09" y="997.60" width="2.81" height="1.00" fill="#8fd33d"/><rect x="502.20" y="993.60" width="3.01" height="5.00" fill="#c8474d"/><rect x="502.20" y="995.60" width="3.01" height="3.00" fill="#5190e0"/><rect x="505.31" y="962.60" width="3.01" height="36.00" fill="#c8474d"/><rect x="505.31" y="978.60" width="3.01" height="20.00" fill="#5190e0"/><rect x="505.31" y="983.60" width="3.01" height="15.00" fill="#8fd33d"/><rect x="508.42" y="966.60" width="3.01" height="32.00" fill="#c8474d"/><rect x="508.42" y="982.60" width="3.01" height="16.00" fill="#8fd33d"/><rect x="508.42" y="993.60" width="3.01" height="5.00" fill="#5190e0"/><rect x="511.53" y="992.60" width="3.01" height="6.00" fill="#5190e0"/><rect x="511.53" y="996.60" width="3.01" height="2.00" fill="#c8474d"/><rect x="514.64" y="995.85" width="2.81" height="2.75" fill="#5190e0"/><rect x="514.64" y="996.40" width="2.81" height="2.20" fill="#c8474d"/><rect x="514.64" y="997.60" width="2.81" height="1.00" fill="#8fd33d"/><rect x="517.75" y="995.31" width="2.81" height="3.29" fill="#5190e0"/><rect x="517.75" y="996.40" width="2.81" height="2.20" fill="#8fd33d"/><rect x="517.75" y="997.30" width="2.81" height="1.30" fill="#c8474d"/><rect x="520.86" y="995.01" width="2.81" height="3.59" fill="#5190e0"/><rect x="520.86" y="996.40" width="2.81" height="2.20" fill="#c8474d"/><rect x="520.86" y="997.60" width="2.81" height="1.00" fill="#8fd33d"/><rect x="523.97" y="995.76" width="2.81" height="2.84" fill="#5190e0"/><rect x="523.97" y="996.40" width="2.81" height="2.20" fill="#c8474d"/><rect x="523.97" y="997.60" width="2.81" height="1.00" fill="#8fd33d"/><rect x="527.08" y="995.41" width="2.81" height="3.19" fill="#5190e0"/><rect x="527.08" y="996.40" width="2.81" height="2.20" fill="#8fd33d"/><rect x="527.08" y="997.30" width="2.81" height="1.30" fill="#c8474d"/><rect x="530.19" y="995.94" width="2.81" height="2.66" fill="#5190e0"/><rect x="530.19" y="996.40" width="2.81" height="2.20" fill="#c8474d"/><rect x="530.19" y="997.60" width="2.81" height="1.00" fill="#8fd33d"/><rect x="533.30" y="995.51" width="2.81" height="3.09" fill="#5190e0"/><rect x="533.30" y="996.40" width="2.81" height="2.20" fill="#c8474d"/><rect x="533.30" y="997.60" width="2.81" height="1.00" fill="#8fd33d"/><rect x="536.41" y="995.27" width="2.81" height="3.33" fill="#5190e0"/><rect x="536.41" y="996.40" width="2.81" height="2.20" fill="#c8474d"/><rect x="536.41" y="997.60" width="2.81" height="1.00" fill="#8fd33d"/><rect x="539.52" y="995.05" width="2.81" height="3.55" fill="#5190e0"/><rect x="539.52" y="996.40" width="2.81" height="2.20" fill="#8fd33d"/><rect x="539.52" y="997.30" width="2.81" height="1.30" fill="#c8474d"/><rect x="542.63" y="995.57" width="2.81" height="3.03" fill="#5190e0"/><rect x="542.63" y="996.40" width="2.81" height="2.20" fill="#c8474d"/><rect x="542.63" y="997.60" width="2.81" height="1.00" fill="#8fd33d"/><rect x="545.74" y="995.85" width="2.81" height="2.75" fill="#5190e0"/><rect x="545.74" y="996.40" width="2.81" height="2.20" fill="#8fd33d"/><rect x="545.74" y="997.30" width="2.81" height="1.30" fill="#c8474d"/><rect x="551.96" y="995.00" width="2.81" height="3.60" fill="#5190e0"/><rect x="551.96" y="996.40" width="2.81" height="2.20" fill="#c8474d"/><rect x="551.96" y="997.60" width="2.81" height="1.00" fill="#8fd33d"/><rect x="555.07" y="939.00" width="3.01" height="59.60" fill="#c8474d"/><rect x="555.07" y="974.60" width="3.01" height="24.00" fill="#5190e0"/><rect x="558.18" y="994.60" width="3.01" height="4.00" fill="#5190e0"/><rect x="558.18" y="996.60" width="3.01" height="2.00" fill="#c8474d"/><rect x="561.29" y="968.60" width="3.01" height="30.00" fill="#8fd33d"/><rect x="561.29" y="983.60" width="3.01" height="15.00" fill="#c8474d"/><rect x="561.29" y="989.60" width="3.01" height="9.00" fill="#5190e0"/><rect x="564.40" y="995.15" width="2.81" height="3.45" fill="#5190e0"/><rect x="564.40" y="996.40" width="2.81" height="2.20" fill="#8fd33d"/><rect x="564.40" y="997.30" width="2.81" height="1.30" fill="#c8474d"/><rect x="567.51" y="995.27" width="2.81" height="3.33" fill="#5190e0"/><rect x="567.51" y="996.40" width="2.81" height="2.20" fill="#c8474d"/><rect x="567.51" y="997.60" width="2.81" height="1.00" fill="#8fd33d"/><rect x="570.62" y="990.60" width="3.01" height="8.00" fill="#c8474d"/><rect x="570.62" y="995.60" width="3.01" height="3.00" fill="#8fd33d"/><rect x="573.73" y="979.60" width="3.01" height="19.00" fill="#5190e0"/><rect x="573.73" y="985.60" width="3.01" height="13.00" fill="#8fd33d"/><rect x="573.73" y="989.60" width="3.01" height="9.00" fill="#c8474d"/><rect x="576.84" y="995.60" width="2.81" height="3.00" fill="#5190e0"/><rect x="576.84" y="996.40" width="2.81" height="2.20" fill="#c8474d"/><rect x="576.84" y="997.60" width="2.81" height="1.00" fill="#8fd33d"/><rect x="583.06" y="939.00" width="3.01" height="59.60" fill="#c8474d"/><rect x="583.06" y="968.60" width="3.01" height="30.00" fill="#8fd33d"/><rect x="583.06" y="978.60" width="3.01" height="20.00" fill="#5190e0"/><rect x="589.28" y="995.01" width="2.81" height="3.59" fill="#5190e0"/><rect x="589.28" y="996.40" width="2.81" height="2.20" fill="#c8474d"/><rect x="589.28" y="997.60" width="2.81" height="1.00" fill="#8fd33d"/><rect x="592.39" y="995.04" width="2.81" height="3.56" fill="#5190e0"/><rect x="592.39" y="996.40" width="2.81" height="2.20" fill="#8fd33d"/><rect x="592.39" y="997.30" width="2.81" height="1.30" fill="#c8474d"/><rect x="595.50" y="956.60" width="3.01" height="42.00" fill="#c8474d"/><rect x="595.50" y="972.60" width="3.01" height="26.00" fill="#5190e0"/><rect x="595.50" y="978.60" width="3.01" height="20.00" fill="#8fd33d"/><rect x="598.61" y="995.91" width="2.81" height="2.69" fill="#5190e0"/><rect x="598.61" y="996.40" width="2.81" height="2.20" fill="#c8474d"/><rect x="598.61" y="997.60" width="2.81" height="1.00" fill="#8fd33d"/><rect x="601.72" y="995.73" width="2.81" height="2.87" fill="#5190e0"/><rect x="601.72" y="996.40" width="2.81" height="2.20" fill="#8fd33d"/><rect x="601.72" y="997.30" width="2.81" height="1.30" fill="#c8474d"/><rect x="604.83" y="995.21" width="2.81" height="3.39" fill="#5190e0"/><rect x="604.83" y="996.40" width="2.81" height="2.20" fill="#c8474d"/><rect x="604.83" y="997.60" width="2.81" height="1.00" fill="#8fd33d"/><rect x="607.94" y="995.23" width="2.81" height="3.37" fill="#5190e0"/><rect x="607.94" y="996.40" width="2.81" height="2.20" fill="#8fd33d"/><rect x="607.94" y="997.30" width="2.81" height="1.30" fill="#c8474d"/><rect x="614.16" y="990.60" width="3.01" height="8.00" fill="#c8474d"/><rect x="614.16" y="992.60" width="3.01" height="6.00" fill="#8fd33d"/><rect x="614.16" y="995.60" width="3.01" height="3.00" fill="#5190e0"/><rect x="620.38" y="964.60" width="3.01" height="34.00" fill="#c8474d"/><rect x="620.38" y="978.60" width="3.01" height="20.00" fill="#8fd33d"/><rect x="620.38" y="989.60" width="3.01" height="9.00" fill="#5190e0"/><rect x="623.49" y="995.34" width="2.81" height="3.26" fill="#5190e0"/><rect x="623.49" y="996.40" width="2.81" height="2.20" fill="#8fd33d"/><rect x="623.49" y="997.30" width="2.81" height="1.30" fill="#c8474d"/><rect x="626.60" y="995.64" width="2.81" height="2.96" fill="#5190e0"/><rect x="626.60" y="996.40" width="2.81" height="2.20" fill="#8fd33d"/><rect x="626.60" y="997.30" width="2.81" height="1.30" fill="#c8474d"/><rect x="629.71" y="995.23" width="2.81" height="3.37" fill="#5190e0"/><rect x="629.71" y="996.40" width="2.81" height="2.20" fill="#c8474d"/><rect x="629.71" y="997.60" width="2.81" height="1.00" fill="#8fd33d"/><rect x="632.82" y="939.00" width="3.01" height="59.60" fill="#5190e0"/><rect x="632.82" y="995.60" width="3.01" height="3.00" fill="#c8474d"/><rect x="635.93" y="991.60" width="3.01" height="7.00" fill="#5190e0"/><rect x="635.93" y="993.60" width="3.01" height="5.00" fill="#8fd33d"/><rect x="635.93" y="996.60" width="3.01" height="2.00" fill="#c8474d"/><rect x="639.04" y="993.20" width="3.01" height="5.40" fill="#5190e0"/><rect x="639.04" y="994.00" width="3.01" height="4.60" fill="#8fd33d"/><rect x="639.04" y="994.60" width="3.01" height="4.00" fill="#c8474d"/><rect x="642.15" y="984.60" width="3.01" height="14.00" fill="#5190e0"/><rect x="642.15" y="985.60" width="3.01" height="13.00" fill="#8fd33d"/><rect x="642.15" y="995.60" width="3.01" height="3.00" fill="#c8474d"/><rect x="645.26" y="992.87" width="3.01" height="5.73" fill="#5190e0"/><rect x="645.26" y="993.67" width="3.01" height="4.93" fill="#8fd33d"/><rect x="645.26" y="994.27" width="3.01" height="4.33" fill="#c8474d"/><rect x="648.37" y="993.35" width="3.01" height="5.25" fill="#5190e0"/><rect x="648.37" y="994.15" width="3.01" height="4.45" fill="#8fd33d"/><rect x="648.37" y="994.75" width="3.01" height="3.85" fill="#c8474d"/><rect x="651.48" y="993.39" width="3.01" height="5.21" fill="#5190e0"/><rect x="651.48" y="994.19" width="3.01" height="4.41" fill="#8fd33d"/><rect x="651.48" y="994.79" width="3.01" height="3.81" fill="#c8474d"/><rect x="654.59" y="993.23" width="3.01" height="5.37" fill="#5190e0"/><rect x="654.59" y="994.03" width="3.01" height="4.57" fill="#8fd33d"/><rect x="654.59" y="994.63" width="3.01" height="3.97" fill="#c8474d"/><rect x="657.70" y="993.04" width="3.01" height="5.56" fill="#5190e0"/><rect x="657.70" y="993.84" width="3.01" height="4.76" fill="#8fd33d"/><rect x="657.70" y="994.44" width="3.01" height="4.16" fill="#c8474d"/><rect x="660.81" y="989.60" width="3.01" height="9.00" fill="#c8474d"/><rect x="660.81" y="991.60" width="3.01" height="7.00" fill="#5190e0"/><rect x="660.81" y="993.60" width="3.01" height="5.00" fill="#8fd33d"/><rect x="663.92" y="993.06" width="3.01" height="5.54" fill="#5190e0"/><rect x="663.92" y="993.86" width="3.01" height="4.74" fill="#8fd33d"/><rect x="663.92" y="994.46" width="3.01" height="4.14" fill="#c8474d"/><rect x="667.03" y="993.26" width="3.01" height="5.34" fill="#5190e0"/><rect x="667.03" y="994.16" width="3.01" height="4.44" fill="#c8474d"/><rect x="667.03" y="995.76" width="3.01" height="2.84" fill="#8fd33d"/><rect x="670.14" y="993.02" width="3.01" height="5.58" fill="#5190e0"/><rect x="670.14" y="993.82" width="3.01" height="4.78" fill="#8fd33d"/><rect x="670.14" y="994.42" width="3.01" height="4.18" fill="#c8474d"/><rect x="673.25" y="948.60" width="3.01" height="50.00" fill="#8fd33d"/><rect x="673.25" y="986.60" width="3.01" height="12.00" fill="#c8474d"/><rect x="673.25" y="989.60" width="3.01" height="9.00" fill="#5190e0"/><rect x="676.36" y="993.00" width="3.01" height="5.60" fill="#5190e0"/><rect x="676.36" y="993.90" width="3.01" height="4.70" fill="#c8474d"/><rect x="676.36" y="995.50" width="3.01" height="3.10" fill="#8fd33d"/><rect x="679.47" y="993.21" width="3.01" height="5.39" fill="#5190e0"/><rect x="679.47" y="994.11" width="3.01" height="4.49" fill="#c8474d"/><rect x="679.47" y="995.71" width="3.01" height="2.89" fill="#8fd33d"/><rect x="682.58" y="980.60" width="3.01" height="18.00" fill="#8fd33d"/><rect x="682.58" y="981.60" width="3.01" height="17.00" fill="#c8474d"/><rect x="682.58" y="993.60" width="3.01" height="5.00" fill="#5190e0"/><rect x="685.69" y="992.86" width="3.01" height="5.74" fill="#5190e0"/><rect x="685.69" y="993.66" width="3.01" height="4.94" fill="#8fd33d"/><rect x="685.69" y="994.26" width="3.01" height="4.34" fill="#c8474d"/><rect x="688.80" y="993.41" width="3.01" height="5.19" fill="#5190e0"/><rect x="688.80" y="994.21" width="3.01" height="4.39" fill="#8fd33d"/><rect x="688.80" y="994.81" width="3.01" height="3.79" fill="#c8474d"/><rect x="691.91" y="993.01" width="3.01" height="5.59" fill="#5190e0"/><rect x="691.91" y="993.91" width="3.01" height="4.69" fill="#c8474d"/><rect x="691.91" y="995.51" width="3.01" height="3.09" fill="#8fd33d"/><rect x="695.02" y="968.60" width="3.01" height="30.00" fill="#c8474d"/><rect x="695.02" y="985.60" width="3.01" height="13.00" fill="#8fd33d"/><rect x="695.02" y="986.60" width="3.01" height="12.00" fill="#5190e0"/><rect x="701.24" y="993.48" width="3.01" height="5.12" fill="#5190e0"/><rect x="701.24" y="994.38" width="3.01" height="4.22" fill="#c8474d"/><rect x="701.24" y="995.98" width="3.01" height="2.62" fill="#8fd33d"/><rect x="704.35" y="993.16" width="3.01" height="5.44" fill="#5190e0"/><rect x="704.35" y="994.06" width="3.01" height="4.54" fill="#c8474d"/><rect x="704.35" y="995.66" width="3.01" height="2.94" fill="#8fd33d"/><rect x="710.57" y="993.88" width="3.01" height="4.72" fill="#5190e0"/><rect x="710.57" y="994.78" width="3.01" height="3.82" fill="#c8474d"/><rect x="710.57" y="996.38" width="3.01" height="2.22" fill="#8fd33d"/><rect x="713.68" y="993.34" width="3.01" height="5.26" fill="#5190e0"/><rect x="713.68" y="994.24" width="3.01" height="4.36" fill="#c8474d"/><rect x="713.68" y="995.84" width="3.01" height="2.76" fill="#8fd33d"/><rect x="719.90" y="993.55" width="3.01" height="5.05" fill="#5190e0"/><rect x="719.90" y="994.35" width="3.01" height="4.25" fill="#8fd33d"/><rect x="719.90" y="994.95" width="3.01" height="3.65" fill="#c8474d"/><rect x="723.01" y="972.60" width="3.01" height="26.00" fill="#c8474d"/><rect x="723.01" y="991.60" width="3.01" height="7.00" fill="#5190e0"/><rect x="723.01" y="994.60" width="3.01" height="4.00" fill="#8fd33d"/><rect x="726.12" y="988.60" width="3.01" height="10.00" fill="#5190e0"/><rect x="726.12" y="990.60" width="3.01" height="8.00" fill="#8fd33d"/><rect x="726.12" y="992.60" width="3.01" height="6.00" fill="#c8474d"/><rect x="729.23" y="993.09" width="3.01" height="5.51" fill="#5190e0"/><rect x="729.23" y="993.89" width="3.01" height="4.71" fill="#8fd33d"/><rect x="729.23" y="994.49" width="3.01" height="4.11" fill="#c8474d"/><rect x="732.34" y="993.16" width="3.01" height="5.44" fill="#5190e0"/><rect x="732.34" y="993.96" width="3.01" height="4.64" fill="#8fd33d"/><rect x="732.34" y="994.56" width="3.01" height="4.04" fill="#c8474d"/><rect x="735.45" y="939.00" width="3.01" height="59.60" fill="#c8474d"/><rect x="735.45" y="979.60" width="3.01" height="19.00" fill="#5190e0"/><rect x="735.45" y="982.60" width="3.01" height="16.00" fill="#8fd33d"/><rect x="744.78" y="993.89" width="3.01" height="4.71" fill="#5190e0"/><rect x="744.78" y="994.69" width="3.01" height="3.91" fill="#8fd33d"/><rect x="744.78" y="995.29" width="3.01" height="3.31" fill="#c8474d"/><rect x="747.89" y="993.25" width="3.01" height="5.35" fill="#5190e0"/><rect x="747.89" y="994.05" width="3.01" height="4.55" fill="#8fd33d"/><rect x="747.89" y="994.65" width="3.01" height="3.95" fill="#c8474d"/><rect x="751.00" y="986.60" width="3.01" height="12.00" fill="#c8474d"/><rect x="751.00" y="988.60" width="3.01" height="10.00" fill="#5190e0"/><rect x="751.00" y="993.60" width="3.01" height="5.00" fill="#8fd33d"/><rect x="754.11" y="993.21" width="3.01" height="5.39" fill="#5190e0"/><rect x="754.11" y="994.01" width="3.01" height="4.59" fill="#8fd33d"/><rect x="754.11" y="994.61" width="3.01" height="3.99" fill="#c8474d"/><rect x="757.22" y="994.05" width="3.01" height="4.55" fill="#5190e0"/><rect x="757.22" y="994.85" width="3.01" height="3.75" fill="#8fd33d"/><rect x="757.22" y="995.45" width="3.01" height="3.15" fill="#c8474d"/><rect x="760.33" y="993.81" width="3.01" height="4.79" fill="#5190e0"/><rect x="760.33" y="994.61" width="3.01" height="3.99" fill="#8fd33d"/><rect x="760.33" y="995.21" width="3.01" height="3.39" fill="#c8474d"/><rect x="763.44" y="990.60" width="3.01" height="8.00" fill="#c8474d"/><rect x="763.44" y="993.60" width="3.01" height="5.00" fill="#5190e0"/><rect x="763.44" y="994.60" width="3.01" height="4.00" fill="#8fd33d"/><rect x="766.55" y="993.93" width="3.01" height="4.67" fill="#5190e0"/><rect x="766.55" y="994.73" width="3.01" height="3.87" fill="#8fd33d"/><rect x="766.55" y="995.33" width="3.01" height="3.27" fill="#c8474d"/><rect x="769.66" y="958.60" width="3.01" height="40.00" fill="#c8474d"/><rect x="769.66" y="987.60" width="3.01" height="11.00" fill="#5190e0"/><rect x="769.66" y="990.60" width="3.01" height="8.00" fill="#8fd33d"/><rect x="772.77" y="993.86" width="3.01" height="4.74" fill="#5190e0"/><rect x="772.77" y="994.66" width="3.01" height="3.94" fill="#8fd33d"/><rect x="772.77" y="995.26" width="3.01" height="3.34" fill="#c8474d"/><rect x="775.88" y="994.05" width="3.01" height="4.55" fill="#5190e0"/><rect x="775.88" y="994.85" width="3.01" height="3.75" fill="#8fd33d"/><rect x="775.88" y="995.45" width="3.01" height="3.15" fill="#c8474d"/><rect x="778.99" y="993.61" width="3.01" height="4.99" fill="#5190e0"/><rect x="778.99" y="994.41" width="3.01" height="4.19" fill="#8fd33d"/><rect x="778.99" y="995.01" width="3.01" height="3.59" fill="#c8474d"/><rect x="782.10" y="987.60" width="3.01" height="11.00" fill="#c8474d"/><rect x="782.10" y="988.60" width="3.01" height="10.00" fill="#5190e0"/><rect x="782.10" y="994.60" width="3.01" height="4.00" fill="#8fd33d"/><rect x="788.32" y="939.00" width="3.01" height="59.60" fill="#8fd33d"/><rect x="788.32" y="946.60" width="3.01" height="52.00" fill="#5190e0"/><rect x="788.32" y="994.60" width="3.01" height="4.00" fill="#c8474d"/><rect x="791.43" y="993.33" width="3.01" height="5.27" fill="#5190e0"/><rect x="791.43" y="994.13" width="3.01" height="4.47" fill="#8fd33d"/><rect x="791.43" y="994.73" width="3.01" height="3.87" fill="#c8474d"/><rect x="794.54" y="939.00" width="3.01" height="59.60" fill="#c8474d"/><rect x="794.54" y="972.60" width="3.01" height="26.00" fill="#5190e0"/><rect x="794.54" y="995.60" width="3.01" height="3.00" fill="#8fd33d"/><rect x="797.65" y="992.93" width="3.01" height="5.67" fill="#5190e0"/><rect x="797.65" y="993.73" width="3.01" height="4.87" fill="#8fd33d"/><rect x="797.65" y="994.33" width="3.01" height="4.27" fill="#c8474d"/><rect x="800.76" y="993.57" width="3.01" height="5.03" fill="#5190e0"/><rect x="800.76" y="994.37" width="3.01" height="4.23" fill="#8fd33d"/><rect x="800.76" y="994.97" width="3.01" height="3.63" fill="#c8474d"/><rect x="803.87" y="993.57" width="3.01" height="5.03" fill="#5190e0"/><rect x="803.87" y="994.37" width="3.01" height="4.23" fill="#8fd33d"/><rect x="803.87" y="994.97" width="3.01" height="3.63" fill="#c8474d"/><rect x="806.98" y="993.02" width="3.01" height="5.58" fill="#5190e0"/><rect x="806.98" y="993.82" width="3.01" height="4.78" fill="#8fd33d"/><rect x="806.98" y="994.42" width="3.01" height="4.18" fill="#c8474d"/><rect x="810.09" y="994.05" width="3.01" height="4.55" fill="#5190e0"/><rect x="810.09" y="994.85" width="3.01" height="3.75" fill="#8fd33d"/><rect x="810.09" y="995.45" width="3.01" height="3.15" fill="#c8474d"/><rect x="813.20" y="993.98" width="3.01" height="4.62" fill="#5190e0"/><rect x="813.20" y="994.78" width="3.01" height="3.82" fill="#8fd33d"/><rect x="813.20" y="995.38" width="3.01" height="3.22" fill="#c8474d"/><rect x="816.31" y="993.66" width="3.01" height="4.94" fill="#5190e0"/><rect x="816.31" y="994.46" width="3.01" height="4.14" fill="#8fd33d"/><rect x="816.31" y="995.06" width="3.01" height="3.54" fill="#c8474d"/><rect x="819.42" y="992.85" width="3.01" height="5.75" fill="#5190e0"/><rect x="819.42" y="993.75" width="3.01" height="4.85" fill="#c8474d"/><rect x="819.42" y="995.35" width="3.01" height="3.25" fill="#8fd33d"/><rect x="822.53" y="993.56" width="3.01" height="5.04" fill="#5190e0"/><rect x="822.53" y="994.46" width="3.01" height="4.14" fill="#c8474d"/><rect x="822.53" y="996.06" width="3.01" height="2.54" fill="#8fd33d"/><rect x="825.64" y="993.27" width="3.01" height="5.33" fill="#5190e0"/><rect x="825.64" y="994.07" width="3.01" height="4.53" fill="#8fd33d"/><rect x="825.64" y="994.67" width="3.01" height="3.93" fill="#c8474d"/><rect x="828.75" y="993.92" width="3.01" height="4.68" fill="#5190e0"/><rect x="828.75" y="994.72" width="3.01" height="3.88" fill="#8fd33d"/><rect x="828.75" y="995.32" width="3.01" height="3.28" fill="#c8474d"/><rect x="831.86" y="993.37" width="3.01" height="5.23" fill="#5190e0"/><rect x="831.86" y="994.27" width="3.01" height="4.33" fill="#c8474d"/><rect x="831.86" y="995.87" width="3.01" height="2.73" fill="#8fd33d"/><rect x="834.97" y="992.84" width="3.01" height="5.76" fill="#5190e0"/><rect x="834.97" y="993.64" width="3.01" height="4.96" fill="#8fd33d"/><rect x="834.97" y="994.24" width="3.01" height="4.36" fill="#c8474d"/><rect x="838.08" y="953.60" width="3.01" height="45.00" fill="#c8474d"/><rect x="838.08" y="982.60" width="3.01" height="16.00" fill="#8fd33d"/><rect x="838.08" y="984.60" width="3.01" height="14.00" fill="#5190e0"/><rect x="841.19" y="993.64" width="3.01" height="4.96" fill="#5190e0"/><rect x="841.19" y="994.54" width="3.01" height="4.06" fill="#c8474d"/><rect x="841.19" y="996.14" width="3.01" height="2.46" fill="#8fd33d"/><rect x="844.30" y="994.10" width="3.01" height="4.50" fill="#5190e0"/><rect x="844.30" y="994.90" width="3.01" height="3.70" fill="#8fd33d"/><rect x="844.30" y="995.50" width="3.01" height="3.10" fill="#c8474d"/><rect x="847.41" y="993.36" width="3.01" height="5.24" fill="#5190e0"/><rect x="847.41" y="994.16" width="3.01" height="4.44" fill="#8fd33d"/><rect x="847.41" y="994.76" width="3.01" height="3.84" fill="#c8474d"/><rect x="850.52" y="993.92" width="3.01" height="4.68" fill="#5190e0"/><rect x="850.52" y="994.72" width="3.01" height="3.88" fill="#8fd33d"/><rect x="850.52" y="995.32" width="3.01" height="3.28" fill="#c8474d"/><rect x="853.63" y="992.94" width="3.01" height="5.66" fill="#5190e0"/><rect x="853.63" y="993.74" width="3.01" height="4.86" fill="#8fd33d"/><rect x="853.63" y="994.34" width="3.01" height="4.26" fill="#c8474d"/><rect x="856.74" y="993.54" width="3.01" height="5.06" fill="#5190e0"/><rect x="856.74" y="994.34" width="3.01" height="4.26" fill="#8fd33d"/><rect x="856.74" y="994.94" width="3.01" height="3.66" fill="#c8474d"/><rect x="859.85" y="993.72" width="3.01" height="4.88" fill="#5190e0"/><rect x="859.85" y="994.62" width="3.01" height="3.98" fill="#c8474d"/><rect x="859.85" y="996.22" width="3.01" height="2.38" fill="#8fd33d"/><rect x="862.96" y="993.61" width="3.01" height="4.99" fill="#5190e0"/><rect x="862.96" y="994.51" width="3.01" height="4.09" fill="#c8474d"/><rect x="862.96" y="996.11" width="3.01" height="2.49" fill="#8fd33d"/><rect x="866.07" y="992.91" width="3.01" height="5.69" fill="#5190e0"/><rect x="866.07" y="993.71" width="3.01" height="4.89" fill="#8fd33d"/><rect x="866.07" y="994.31" width="3.01" height="4.29" fill="#c8474d"/><rect x="869.18" y="993.76" width="3.01" height="4.84" fill="#5190e0"/><rect x="869.18" y="994.66" width="3.01" height="3.94" fill="#c8474d"/><rect x="869.18" y="996.26" width="3.01" height="2.34" fill="#8fd33d"/><rect x="872.29" y="993.45" width="3.01" height="5.15" fill="#5190e0"/><rect x="872.29" y="994.25" width="3.01" height="4.35" fill="#8fd33d"/><rect x="872.29" y="994.85" width="3.01" height="3.75" fill="#c8474d"/><rect x="875.40" y="993.69" width="3.01" height="4.91" fill="#5190e0"/><rect x="875.40" y="994.59" width="3.01" height="4.01" fill="#c8474d"/><rect x="875.40" y="996.19" width="3.01" height="2.41" fill="#8fd33d"/><rect x="878.51" y="993.46" width="3.01" height="5.14" fill="#5190e0"/><rect x="878.51" y="994.26" width="3.01" height="4.34" fill="#8fd33d"/><rect x="878.51" y="994.86" width="3.01" height="3.74" fill="#c8474d"/><rect x="881.62" y="993.48" width="3.01" height="5.12" fill="#5190e0"/><rect x="881.62" y="994.28" width="3.01" height="4.32" fill="#8fd33d"/><rect x="881.62" y="994.88" width="3.01" height="3.72" fill="#c8474d"/><rect x="884.73" y="993.29" width="3.01" height="5.31" fill="#5190e0"/><rect x="884.73" y="994.09" width="3.01" height="4.51" fill="#8fd33d"/><rect x="884.73" y="994.69" width="3.01" height="3.91" fill="#c8474d"/><rect x="887.84" y="993.72" width="3.01" height="4.88" fill="#5190e0"/><rect x="887.84" y="994.62" width="3.01" height="3.98" fill="#c8474d"/><rect x="887.84" y="996.22" width="3.01" height="2.38" fill="#8fd33d"/><rect x="890.95" y="993.03" width="3.01" height="5.57" fill="#5190e0"/><rect x="890.95" y="993.83" width="3.01" height="4.77" fill="#8fd33d"/><rect x="890.95" y="994.43" width="3.01" height="4.17" fill="#c8474d"/><rect x="894.06" y="993.41" width="3.01" height="5.19" fill="#5190e0"/><rect x="894.06" y="994.21" width="3.01" height="4.39" fill="#8fd33d"/><rect x="894.06" y="994.81" width="3.01" height="3.79" fill="#c8474d"/><rect x="897.17" y="992.88" width="3.01" height="5.72" fill="#5190e0"/><rect x="897.17" y="993.78" width="3.01" height="4.82" fill="#c8474d"/><rect x="897.17" y="995.38" width="3.01" height="3.22" fill="#8fd33d"/><rect x="900.28" y="993.78" width="3.01" height="4.82" fill="#5190e0"/><rect x="900.28" y="994.58" width="3.01" height="4.02" fill="#8fd33d"/><rect x="900.28" y="995.18" width="3.01" height="3.42" fill="#c8474d"/><rect x="903.39" y="986.60" width="3.01" height="12.00" fill="#5190e0"/><rect x="903.39" y="988.60" width="3.01" height="10.00" fill="#c8474d"/><rect x="903.39" y="993.60" width="3.01" height="5.00" fill="#8fd33d"/><rect x="906.50" y="993.90" width="3.01" height="4.70" fill="#5190e0"/><rect x="906.50" y="994.80" width="3.01" height="3.80" fill="#c8474d"/><rect x="906.50" y="996.40" width="3.01" height="2.20" fill="#8fd33d"/><rect x="909.61" y="993.72" width="3.01" height="4.88" fill="#5190e0"/><rect x="909.61" y="994.52" width="3.01" height="4.08" fill="#8fd33d"/><rect x="909.61" y="995.12" width="3.01" height="3.48" fill="#c8474d"/><rect x="912.72" y="979.60" width="3.01" height="19.00" fill="#c8474d"/><rect x="912.72" y="984.60" width="3.01" height="14.00" fill="#5190e0"/><rect x="912.72" y="994.60" width="3.01" height="4.00" fill="#8fd33d"/><rect x="915.83" y="939.00" width="3.01" height="59.60" fill="#5190e0"/><rect x="915.83" y="994.60" width="3.01" height="4.00" fill="#c8474d"/><rect x="918.94" y="939.00" width="3.01" height="59.60" fill="#c8474d"/><rect x="918.94" y="993.60" width="3.01" height="5.00" fill="#5190e0"/><rect x="922.05" y="993.48" width="3.01" height="5.12" fill="#5190e0"/><rect x="922.05" y="994.28" width="3.01" height="4.32" fill="#8fd33d"/><rect x="922.05" y="994.88" width="3.01" height="3.72" fill="#c8474d"/><rect x="925.16" y="993.31" width="3.01" height="5.29" fill="#5190e0"/><rect x="925.16" y="994.21" width="3.01" height="4.39" fill="#c8474d"/><rect x="925.16" y="995.81" width="3.01" height="2.79" fill="#8fd33d"/><rect x="928.27" y="993.95" width="3.01" height="4.65" fill="#5190e0"/><rect x="928.27" y="994.85" width="3.01" height="3.75" fill="#c8474d"/><rect x="928.27" y="996.45" width="3.01" height="2.15" fill="#8fd33d"/><rect x="931.38" y="993.71" width="3.01" height="4.89" fill="#5190e0"/><rect x="931.38" y="994.51" width="3.01" height="4.09" fill="#8fd33d"/><rect x="931.38" y="995.11" width="3.01" height="3.49" fill="#c8474d"/><rect x="934.49" y="993.66" width="3.01" height="4.94" fill="#5190e0"/><rect x="934.49" y="994.46" width="3.01" height="4.14" fill="#8fd33d"/><rect x="934.49" y="995.06" width="3.01" height="3.54" fill="#c8474d"/><rect x="937.60" y="993.41" width="3.01" height="5.19" fill="#5190e0"/><rect x="937.60" y="994.21" width="3.01" height="4.39" fill="#8fd33d"/><rect x="937.60" y="994.81" width="3.01" height="3.79" fill="#c8474d"/><rect x="940.71" y="993.63" width="3.01" height="4.97" fill="#5190e0"/><rect x="940.71" y="994.53" width="3.01" height="4.07" fill="#c8474d"/><rect x="940.71" y="996.13" width="3.01" height="2.47" fill="#8fd33d"/><rect x="943.82" y="993.33" width="3.01" height="5.27" fill="#5190e0"/><rect x="943.82" y="994.13" width="3.01" height="4.47" fill="#8fd33d"/><rect x="943.82" y="994.73" width="3.01" height="3.87" fill="#c8474d"/><rect x="946.93" y="993.77" width="3.01" height="4.83" fill="#5190e0"/><rect x="946.93" y="994.57" width="3.01" height="4.03" fill="#8fd33d"/><rect x="946.93" y="995.17" width="3.01" height="3.43" fill="#c8474d"/><rect x="950.04" y="992.91" width="3.01" height="5.69" fill="#5190e0"/><rect x="950.04" y="993.81" width="3.01" height="4.79" fill="#c8474d"/><rect x="950.04" y="995.41" width="3.01" height="3.19" fill="#8fd33d"/><rect x="953.15" y="993.39" width="3.01" height="5.21" fill="#5190e0"/><rect x="953.15" y="994.19" width="3.01" height="4.41" fill="#8fd33d"/><rect x="953.15" y="994.79" width="3.01" height="3.81" fill="#c8474d"/><rect x="956.26" y="993.09" width="3.01" height="5.51" fill="#5190e0"/><rect x="956.26" y="993.89" width="3.01" height="4.71" fill="#8fd33d"/><rect x="956.26" y="994.49" width="3.01" height="4.11" fill="#c8474d"/><rect x="959.37" y="993.35" width="3.01" height="5.25" fill="#5190e0"/><rect x="959.37" y="994.25" width="3.01" height="4.35" fill="#c8474d"/><rect x="959.37" y="995.85" width="3.01" height="2.75" fill="#8fd33d"/><rect x="962.48" y="993.28" width="3.01" height="5.32" fill="#5190e0"/><rect x="962.48" y="994.08" width="3.01" height="4.52" fill="#8fd33d"/><rect x="962.48" y="994.68" width="3.01" height="3.92" fill="#c8474d"/><rect x="968.70" y="992.91" width="3.01" height="5.69" fill="#5190e0"/><rect x="968.70" y="993.71" width="3.01" height="4.89" fill="#8fd33d"/><rect x="968.70" y="994.31" width="3.01" height="4.29" fill="#c8474d"/><rect x="971.81" y="993.59" width="3.01" height="5.01" fill="#5190e0"/><rect x="971.81" y="994.49" width="3.01" height="4.11" fill="#c8474d"/><rect x="971.81" y="996.09" width="3.01" height="2.51" fill="#8fd33d"/><rect x="974.92" y="980.10" width="3.01" height="18.50" fill="#c8474d"/><rect x="974.92" y="988.60" width="3.01" height="10.00" fill="#8fd33d"/><rect x="974.92" y="991.60" width="3.01" height="7.00" fill="#5190e0"/><rect x="981.14" y="993.84" width="3.01" height="4.76" fill="#5190e0"/><rect x="981.14" y="994.64" width="3.01" height="3.96" fill="#8fd33d"/><rect x="981.14" y="995.24" width="3.01" height="3.36" fill="#c8474d"/><rect x="984.25" y="993.02" width="3.01" height="5.58" fill="#5190e0"/><rect x="984.25" y="993.82" width="3.01" height="4.78" fill="#8fd33d"/><rect x="984.25" y="994.42" width="3.01" height="4.18" fill="#c8474d"/><rect x="987.36" y="986.93" width="3.01" height="11.67" fill="#5190e0"/><rect x="987.36" y="989.33" width="3.01" height="9.27" fill="#c8474d"/><rect x="987.36" y="990.93" width="3.01" height="7.67" fill="#8fd33d"/><rect x="990.47" y="980.60" width="3.01" height="18.00" fill="#c8474d"/><rect x="990.47" y="987.60" width="3.01" height="11.00" fill="#5190e0"/><rect x="990.47" y="989.60" width="3.01" height="9.00" fill="#8fd33d"/><rect x="993.58" y="988.03" width="3.01" height="10.57" fill="#5190e0"/><rect x="993.58" y="990.43" width="3.01" height="8.17" fill="#c8474d"/><rect x="993.58" y="992.03" width="3.01" height="6.57" fill="#8fd33d"/><rect x="996.69" y="988.31" width="3.01" height="10.29" fill="#5190e0"/><rect x="996.69" y="989.81" width="3.01" height="8.79" fill="#8fd33d"/><rect x="996.69" y="991.31" width="3.01" height="7.29" fill="#c8474d"/><rect x="1002.91" y="987.60" width="3.01" height="11.00" fill="#5190e0"/><rect x="1002.91" y="990.10" width="3.01" height="8.50" fill="#8fd33d"/><rect x="1006.02" y="987.43" width="3.01" height="11.17" fill="#5190e0"/><rect x="1006.02" y="989.93" width="3.01" height="8.67" fill="#8fd33d"/><rect x="1009.13" y="988.14" width="3.01" height="10.46" fill="#5190e0"/><rect x="1009.13" y="990.54" width="3.01" height="8.06" fill="#c8474d"/><rect x="1009.13" y="992.14" width="3.01" height="6.46" fill="#8fd33d"/><rect x="1012.24" y="987.27" width="3.01" height="11.33" fill="#5190e0"/><rect x="1012.24" y="988.77" width="3.01" height="9.83" fill="#8fd33d"/><rect x="1012.24" y="990.27" width="3.01" height="8.33" fill="#c8474d"/><rect x="1015.35" y="986.64" width="3.01" height="11.96" fill="#5190e0"/><rect x="1015.35" y="989.04" width="3.01" height="9.56" fill="#c8474d"/><rect x="1015.35" y="990.64" width="3.01" height="7.96" fill="#8fd33d"/><rect x="1018.46" y="988.50" width="3.01" height="10.10" fill="#5190e0"/><rect x="1018.46" y="991.00" width="3.01" height="7.60" fill="#8fd33d"/><rect x="1021.57" y="961.60" width="3.01" height="37.00" fill="#8fd33d"/><rect x="1021.57" y="973.60" width="3.01" height="25.00" fill="#c8474d"/><rect x="1021.57" y="982.60" width="3.01" height="16.00" fill="#5190e0"/><rect x="1024.68" y="987.31" width="3.01" height="11.29" fill="#5190e0"/><rect x="1024.68" y="989.71" width="3.01" height="8.89" fill="#c8474d"/><rect x="1024.68" y="991.31" width="3.01" height="7.29" fill="#8fd33d"/><rect x="1027.79" y="988.33" width="3.01" height="10.27" fill="#5190e0"/><rect x="1027.79" y="989.83" width="3.01" height="8.77" fill="#8fd33d"/><rect x="1027.79" y="991.33" width="3.01" height="7.27" fill="#c8474d"/><rect x="1030.90" y="988.30" width="3.01" height="10.30" fill="#5190e0"/><rect x="1030.90" y="990.70" width="3.01" height="7.90" fill="#c8474d"/><rect x="1030.90" y="992.30" width="3.01" height="6.30" fill="#8fd33d"/><rect x="1034.01" y="988.28" width="3.01" height="10.32" fill="#5190e0"/><rect x="1034.01" y="990.78" width="3.01" height="7.82" fill="#8fd33d"/><rect x="1037.12" y="988.38" width="3.01" height="10.22" fill="#5190e0"/><rect x="1037.12" y="990.88" width="3.01" height="7.72" fill="#8fd33d"/><rect x="1040.23" y="988.48" width="3.01" height="10.12" fill="#5190e0"/><rect x="1040.23" y="989.98" width="3.01" height="8.62" fill="#8fd33d"/><rect x="1040.23" y="991.48" width="3.01" height="7.12" fill="#c8474d"/><rect x="1043.34" y="986.84" width="3.01" height="11.76" fill="#5190e0"/><rect x="1043.34" y="988.34" width="3.01" height="10.26" fill="#8fd33d"/><rect x="1043.34" y="989.84" width="3.01" height="8.76" fill="#c8474d"/><rect x="1046.45" y="987.97" width="3.01" height="10.63" fill="#5190e0"/><rect x="1046.45" y="990.37" width="3.01" height="8.23" fill="#c8474d"/><rect x="1046.45" y="991.97" width="3.01" height="6.63" fill="#8fd33d"/><rect x="1049.56" y="986.72" width="3.01" height="11.88" fill="#5190e0"/><rect x="1049.56" y="989.22" width="3.01" height="9.38" fill="#8fd33d"/><rect x="1052.67" y="987.21" width="3.01" height="11.39" fill="#5190e0"/><rect x="1052.67" y="988.71" width="3.01" height="9.89" fill="#8fd33d"/><rect x="1052.67" y="990.21" width="3.01" height="8.39" fill="#c8474d"/><rect x="1055.78" y="987.59" width="3.01" height="11.01" fill="#5190e0"/><rect x="1055.78" y="989.99" width="3.01" height="8.61" fill="#c8474d"/><rect x="1055.78" y="991.59" width="3.01" height="7.01" fill="#8fd33d"/><rect x="1058.89" y="987.36" width="3.01" height="11.24" fill="#5190e0"/><rect x="1058.89" y="988.86" width="3.01" height="9.74" fill="#8fd33d"/><rect x="1058.89" y="990.36" width="3.01" height="8.24" fill="#c8474d"/><rect x="1062.00" y="988.09" width="3.01" height="10.51" fill="#5190e0"/><rect x="1062.00" y="990.49" width="3.01" height="8.11" fill="#c8474d"/><rect x="1062.00" y="992.09" width="3.01" height="6.51" fill="#8fd33d"/><rect x="1065.11" y="988.33" width="3.01" height="10.27" fill="#5190e0"/><rect x="1065.11" y="989.83" width="3.01" height="8.77" fill="#8fd33d"/><rect x="1065.11" y="991.33" width="3.01" height="7.27" fill="#c8474d"/><rect x="1068.22" y="987.13" width="3.01" height="11.47" fill="#5190e0"/><rect x="1068.22" y="988.63" width="3.01" height="9.97" fill="#8fd33d"/><rect x="1068.22" y="990.13" width="3.01" height="8.47" fill="#c8474d"/><rect x="1074.44" y="987.29" width="3.01" height="11.31" fill="#5190e0"/><rect x="1074.44" y="988.79" width="3.01" height="9.81" fill="#8fd33d"/><rect x="1074.44" y="990.29" width="3.01" height="8.31" fill="#c8474d"/><rect x="1077.55" y="988.42" width="3.01" height="10.18" fill="#5190e0"/><rect x="1077.55" y="989.92" width="3.01" height="8.68" fill="#8fd33d"/><rect x="1077.55" y="991.42" width="3.01" height="7.18" fill="#c8474d"/><rect x="1083.77" y="988.12" width="3.01" height="10.48" fill="#5190e0"/><rect x="1083.77" y="990.52" width="3.01" height="8.08" fill="#c8474d"/><rect x="1083.77" y="992.12" width="3.01" height="6.48" fill="#8fd33d"/><rect x="1086.88" y="987.95" width="3.01" height="10.65" fill="#5190e0"/><rect x="1086.88" y="990.45" width="3.01" height="8.15" fill="#8fd33d"/><rect x="1089.99" y="987.15" width="3.01" height="11.45" fill="#5190e0"/><rect x="1089.99" y="989.65" width="3.01" height="8.95" fill="#8fd33d"/><rect x="1093.10" y="986.70" width="3.01" height="11.90" fill="#5190e0"/><rect x="1093.10" y="989.20" width="3.01" height="9.40" fill="#8fd33d"/><rect x="1096.21" y="988.37" width="3.01" height="10.23" fill="#5190e0"/><rect x="1096.21" y="990.77" width="3.01" height="7.83" fill="#c8474d"/><rect x="1096.21" y="992.37" width="3.01" height="6.23" fill="#8fd33d"/><rect x="1099.32" y="986.96" width="3.01" height="11.64" fill="#5190e0"/><rect x="1099.32" y="988.46" width="3.01" height="10.14" fill="#8fd33d"/><rect x="1099.32" y="989.96" width="3.01" height="8.64" fill="#c8474d"/><rect x="1108.65" y="987.89" width="3.01" height="10.71" fill="#5190e0"/><rect x="1108.65" y="989.39" width="3.01" height="9.21" fill="#8fd33d"/><rect x="1108.65" y="990.89" width="3.01" height="7.71" fill="#c8474d"/><rect x="1111.76" y="987.37" width="3.01" height="11.23" fill="#5190e0"/><rect x="1111.76" y="988.87" width="3.01" height="9.73" fill="#8fd33d"/><rect x="1111.76" y="990.37" width="3.01" height="8.23" fill="#c8474d"/><rect x="1117.98" y="988.33" width="3.01" height="10.27" fill="#5190e0"/><rect x="1117.98" y="990.73" width="3.01" height="7.87" fill="#c8474d"/><rect x="1117.98" y="992.33" width="3.01" height="6.27" fill="#8fd33d"/><rect x="1121.09" y="964.60" width="3.01" height="34.00" fill="#8fd33d"/><rect x="1121.09" y="977.60" width="3.01" height="21.00" fill="#c8474d"/><rect x="1121.09" y="988.60" width="3.01" height="10.00" fill="#5190e0"/><rect x="1130.42" y="997.60" width="2.00" height="1.00" fill="#5190e0"/><rect x="1136.64" y="997.60" width="2.00" height="1.00" fill="#5190e0"/><rect x="1142.86" y="987.39" width="3.01" height="11.21" fill="#8fd33d"/><rect x="1142.86" y="988.39" width="3.01" height="10.21" fill="#c8474d"/><rect x="1145.97" y="987.17" width="3.01" height="11.43" fill="#8fd33d"/><rect x="1145.97" y="988.17" width="3.01" height="10.43" fill="#c8474d"/><rect x="1149.08" y="987.49" width="3.01" height="11.11" fill="#8fd33d"/><rect x="1149.08" y="988.49" width="3.01" height="10.11" fill="#c8474d"/><rect x="1152.19" y="986.40" width="3.01" height="12.20" fill="#8fd33d"/><rect x="1152.19" y="987.40" width="3.01" height="11.20" fill="#c8474d"/><rect x="1155.30" y="986.21" width="3.01" height="12.39" fill="#8fd33d"/><rect x="1155.30" y="987.21" width="3.01" height="11.39" fill="#c8474d"/><rect x="1158.41" y="986.45" width="3.01" height="12.15" fill="#8fd33d"/><rect x="1158.41" y="987.45" width="3.01" height="11.15" fill="#c8474d"/><rect x="1161.52" y="985.13" width="3.01" height="13.47" fill="#8fd33d"/><rect x="1161.52" y="986.13" width="3.01" height="12.47" fill="#c8474d"/><rect x="1164.63" y="986.66" width="3.01" height="11.94" fill="#8fd33d"/><rect x="1164.63" y="987.96" width="3.01" height="10.64" fill="#c8474d"/><rect x="1164.63" y="989.24" width="3.01" height="9.36" fill="#5190e0"/><rect x="1167.74" y="986.71" width="3.01" height="11.89" fill="#8fd33d"/><rect x="1167.74" y="988.01" width="3.01" height="10.59" fill="#c8474d"/><rect x="1167.74" y="988.97" width="3.01" height="9.63" fill="#5190e0"/><rect x="1170.85" y="984.96" width="3.01" height="13.64" fill="#c8474d"/><rect x="1170.85" y="988.46" width="3.01" height="10.14" fill="#8fd33d"/><rect x="1170.85" y="988.71" width="3.01" height="9.89" fill="#5190e0"/><rect x="1173.96" y="987.01" width="3.01" height="11.59" fill="#8fd33d"/><rect x="1173.96" y="988.31" width="3.01" height="10.29" fill="#c8474d"/><rect x="1173.96" y="988.73" width="3.01" height="9.87" fill="#5190e0"/><rect x="1180.18" y="986.30" width="3.01" height="12.30" fill="#8fd33d"/><rect x="1180.18" y="987.60" width="3.01" height="11.00" fill="#c8474d"/><rect x="1180.18" y="988.33" width="3.01" height="10.27" fill="#5190e0"/><rect x="1183.29" y="986.59" width="3.01" height="12.01" fill="#c8474d"/><rect x="1183.29" y="990.09" width="3.01" height="8.51" fill="#8fd33d"/><rect x="1183.29" y="988.65" width="3.01" height="9.95" fill="#5190e0"/><rect x="1186.40" y="985.62" width="3.01" height="12.98" fill="#c8474d"/><rect x="1186.40" y="989.12" width="3.01" height="9.48" fill="#8fd33d"/><rect x="1186.40" y="988.38" width="3.01" height="10.22" fill="#5190e0"/><rect x="1192.62" y="985.93" width="3.01" height="12.67" fill="#8fd33d"/><rect x="1192.62" y="987.23" width="3.01" height="11.37" fill="#c8474d"/><rect x="1192.62" y="988.31" width="3.01" height="10.29" fill="#5190e0"/><rect x="1198.84" y="986.69" width="3.01" height="11.91" fill="#8fd33d"/><rect x="1198.84" y="987.99" width="3.01" height="10.61" fill="#c8474d"/><rect x="1198.84" y="989.53" width="3.01" height="9.07" fill="#5190e0"/><rect x="1201.95" y="986.28" width="3.01" height="12.32" fill="#c8474d"/><rect x="1201.95" y="987.28" width="3.01" height="11.32" fill="#8fd33d"/><rect x="1201.95" y="996.60" width="3.01" height="2.00" fill="#5190e0"/><rect x="1208.17" y="986.52" width="3.01" height="12.08" fill="#8fd33d"/><rect x="1208.17" y="987.82" width="3.01" height="10.78" fill="#c8474d"/><rect x="1208.17" y="989.46" width="3.01" height="9.14" fill="#5190e0"/><rect x="1211.28" y="985.16" width="3.01" height="13.44" fill="#8fd33d"/><rect x="1211.28" y="986.46" width="3.01" height="12.14" fill="#c8474d"/><rect x="1211.28" y="989.32" width="3.01" height="9.28" fill="#5190e0"/><rect x="1214.39" y="985.87" width="3.01" height="12.73" fill="#c8474d"/><rect x="1214.39" y="989.37" width="3.01" height="9.23" fill="#8fd33d"/><rect x="1214.39" y="989.11" width="3.01" height="9.49" fill="#5190e0"/><rect x="1220.61" y="986.52" width="3.01" height="12.08" fill="#c8474d"/><rect x="1220.61" y="990.02" width="3.01" height="8.58" fill="#8fd33d"/><rect x="1220.61" y="989.49" width="3.01" height="9.11" fill="#5190e0"/><rect x="1223.72" y="986.98" width="3.01" height="11.62" fill="#8fd33d"/><rect x="1223.72" y="988.28" width="3.01" height="10.32" fill="#c8474d"/><rect x="1223.72" y="989.49" width="3.01" height="9.11" fill="#5190e0"/><rect x="1229.94" y="986.80" width="3.01" height="11.80" fill="#8fd33d"/><rect x="1229.94" y="988.10" width="3.01" height="10.50" fill="#c8474d"/><rect x="1229.94" y="989.23" width="3.01" height="9.37" fill="#5190e0"/><rect x="1233.05" y="986.52" width="3.01" height="12.08" fill="#c8474d"/><rect x="1233.05" y="990.02" width="3.01" height="8.58" fill="#8fd33d"/><rect x="1233.05" y="988.62" width="3.01" height="9.98" fill="#5190e0"/><rect x="1236.16" y="985.40" width="3.01" height="13.20" fill="#8fd33d"/><rect x="1236.16" y="986.70" width="3.01" height="11.90" fill="#c8474d"/><rect x="1236.16" y="988.85" width="3.01" height="9.75" fill="#5190e0"/><rect x="1239.27" y="984.91" width="3.01" height="13.69" fill="#c8474d"/><rect x="1239.27" y="988.41" width="3.01" height="10.19" fill="#8fd33d"/><rect x="1239.27" y="988.65" width="3.01" height="9.95" fill="#5190e0"/><rect x="1242.38" y="986.34" width="3.01" height="12.26" fill="#8fd33d"/><rect x="1242.38" y="987.64" width="3.01" height="10.96" fill="#c8474d"/><rect x="1242.38" y="989.43" width="3.01" height="9.17" fill="#5190e0"/><rect x="1245.49" y="985.61" width="3.01" height="12.99" fill="#8fd33d"/><rect x="1245.49" y="986.91" width="3.01" height="11.69" fill="#c8474d"/><rect x="1245.49" y="989.23" width="3.01" height="9.37" fill="#5190e0"/><rect x="1248.60" y="987.23" width="3.01" height="11.37" fill="#8fd33d"/><rect x="1248.60" y="988.53" width="3.01" height="10.07" fill="#c8474d"/><rect x="1248.60" y="989.53" width="3.01" height="9.07" fill="#5190e0"/><rect x="1251.71" y="984.93" width="3.01" height="13.67" fill="#8fd33d"/><rect x="1251.71" y="986.23" width="3.01" height="12.37" fill="#c8474d"/><rect x="1251.71" y="988.80" width="3.01" height="9.80" fill="#5190e0"/><rect x="1254.82" y="986.47" width="3.01" height="12.13" fill="#c8474d"/><rect x="1254.82" y="989.97" width="3.01" height="8.63" fill="#8fd33d"/><rect x="1254.82" y="989.58" width="3.01" height="9.02" fill="#5190e0"/><rect x="1257.93" y="987.06" width="3.01" height="11.54" fill="#8fd33d"/><rect x="1257.93" y="988.36" width="3.01" height="10.24" fill="#c8474d"/><rect x="1257.93" y="988.91" width="3.01" height="9.69" fill="#5190e0"/><rect x="1261.04" y="984.95" width="3.01" height="13.65" fill="#8fd33d"/><rect x="1261.04" y="986.25" width="3.01" height="12.35" fill="#c8474d"/><rect x="1261.04" y="988.57" width="3.01" height="10.03" fill="#5190e0"/><rect x="1264.15" y="986.15" width="3.01" height="12.45" fill="#8fd33d"/><rect x="1264.15" y="987.45" width="3.01" height="11.15" fill="#c8474d"/><rect x="1264.15" y="989.04" width="3.01" height="9.56" fill="#5190e0"/><rect x="1267.26" y="985.97" width="3.01" height="12.63" fill="#c8474d"/><rect x="1267.26" y="989.47" width="3.01" height="9.13" fill="#8fd33d"/><rect x="1267.26" y="988.34" width="3.01" height="10.26" fill="#5190e0"/><rect x="1270.37" y="986.25" width="3.01" height="12.35" fill="#c8474d"/><rect x="1270.37" y="987.25" width="3.01" height="11.35" fill="#8fd33d"/><rect x="1270.37" y="996.60" width="3.01" height="2.00" fill="#5190e0"/><rect x="1273.48" y="986.10" width="3.01" height="12.50" fill="#8fd33d"/><rect x="1273.48" y="987.40" width="3.01" height="11.20" fill="#c8474d"/><rect x="1273.48" y="988.45" width="3.01" height="10.15" fill="#5190e0"/><rect x="1276.59" y="986.80" width="3.01" height="11.80" fill="#8fd33d"/><rect x="1276.59" y="988.10" width="3.01" height="10.50" fill="#c8474d"/><rect x="1276.59" y="988.87" width="3.01" height="9.73" fill="#5190e0"/><rect x="1279.70" y="984.92" width="3.01" height="13.68" fill="#8fd33d"/><rect x="1279.70" y="986.92" width="3.01" height="11.68" fill="#c8474d"/><rect x="1279.70" y="989.28" width="3.01" height="9.32" fill="#5190e0"/><rect x="1282.81" y="985.75" width="3.01" height="12.85" fill="#8fd33d"/><rect x="1282.81" y="987.05" width="3.01" height="11.55" fill="#c8474d"/><rect x="1282.81" y="989.08" width="3.01" height="9.52" fill="#5190e0"/><rect x="1285.92" y="987.21" width="3.01" height="11.39" fill="#8fd33d"/><rect x="1285.92" y="988.51" width="3.01" height="10.09" fill="#c8474d"/><rect x="1285.92" y="989.38" width="3.01" height="9.22" fill="#5190e0"/><rect x="1289.03" y="986.80" width="3.01" height="11.80" fill="#8fd33d"/><rect x="1289.03" y="988.10" width="3.01" height="10.50" fill="#c8474d"/><rect x="1289.03" y="988.56" width="3.01" height="10.04" fill="#5190e0"/><rect x="1292.14" y="985.74" width="3.01" height="12.86" fill="#c8474d"/><rect x="1292.14" y="986.74" width="3.01" height="11.86" fill="#8fd33d"/><rect x="1292.14" y="996.60" width="3.01" height="2.00" fill="#5190e0"/><rect x="1298.36" y="986.52" width="3.01" height="12.08" fill="#8fd33d"/><rect x="1298.36" y="987.82" width="3.01" height="10.78" fill="#c8474d"/><rect x="1298.36" y="989.10" width="3.01" height="9.50" fill="#5190e0"/><rect x="1301.47" y="983.34" width="3.01" height="15.26" fill="#8fd33d"/><rect x="1301.47" y="985.34" width="3.01" height="13.26" fill="#c8474d"/><rect x="1301.47" y="988.54" width="3.01" height="10.06" fill="#5190e0"/><rect x="1304.58" y="985.96" width="3.01" height="12.64" fill="#8fd33d"/><rect x="1304.58" y="987.26" width="3.01" height="11.34" fill="#c8474d"/><rect x="1304.58" y="988.56" width="3.01" height="10.04" fill="#5190e0"/><rect x="1307.69" y="985.99" width="3.01" height="12.61" fill="#8fd33d"/><rect x="1307.69" y="987.29" width="3.01" height="11.31" fill="#c8474d"/><rect x="1307.69" y="989.23" width="3.01" height="9.37" fill="#5190e0"/><rect x="1310.80" y="985.85" width="3.01" height="12.75" fill="#c8474d"/><rect x="1310.80" y="989.35" width="3.01" height="9.25" fill="#8fd33d"/><rect x="1310.80" y="988.61" width="3.01" height="9.99" fill="#5190e0"/><rect x="1313.91" y="986.61" width="3.01" height="11.99" fill="#8fd33d"/><rect x="1313.91" y="987.91" width="3.01" height="10.69" fill="#c8474d"/><rect x="1313.91" y="988.67" width="3.01" height="9.93" fill="#5190e0"/><rect x="1317.02" y="984.91" width="3.01" height="13.69" fill="#c8474d"/><rect x="1317.02" y="988.41" width="3.01" height="10.19" fill="#8fd33d"/><rect x="1317.02" y="988.43" width="3.01" height="10.17" fill="#5190e0"/><rect x="1320.13" y="985.77" width="3.01" height="12.83" fill="#8fd33d"/><rect x="1320.13" y="987.07" width="3.01" height="11.53" fill="#c8474d"/><rect x="1320.13" y="989.33" width="3.01" height="9.27" fill="#5190e0"/><rect x="1323.24" y="984.86" width="3.01" height="13.74" fill="#c8474d"/><rect x="1323.24" y="985.86" width="3.01" height="12.74" fill="#8fd33d"/><rect x="1323.24" y="996.60" width="3.01" height="2.00" fill="#5190e0"/><rect x="1326.35" y="986.85" width="3.01" height="11.75" fill="#c8474d"/><rect x="1326.35" y="990.35" width="3.01" height="8.25" fill="#8fd33d"/><rect x="1326.35" y="988.75" width="3.01" height="9.85" fill="#5190e0"/><rect x="1329.46" y="986.33" width="3.01" height="12.27" fill="#c8474d"/><rect x="1329.46" y="989.83" width="3.01" height="8.77" fill="#8fd33d"/><rect x="1329.46" y="989.46" width="3.01" height="9.14" fill="#5190e0"/><rect x="1332.57" y="986.36" width="3.01" height="12.24" fill="#8fd33d"/><rect x="1332.57" y="987.66" width="3.01" height="10.94" fill="#c8474d"/><rect x="1332.57" y="988.45" width="3.01" height="10.15" fill="#5190e0"/><rect x="1335.68" y="985.74" width="3.01" height="12.86" fill="#8fd33d"/><rect x="1335.68" y="987.04" width="3.01" height="11.56" fill="#c8474d"/><rect x="1335.68" y="988.43" width="3.01" height="10.17" fill="#5190e0"/><rect x="1338.79" y="986.74" width="3.01" height="11.86" fill="#c8474d"/><rect x="1338.79" y="990.24" width="3.01" height="8.36" fill="#8fd33d"/><rect x="1338.79" y="989.52" width="3.01" height="9.08" fill="#5190e0"/><rect x="1341.90" y="985.48" width="3.01" height="13.12" fill="#8fd33d"/><rect x="1341.90" y="986.78" width="3.01" height="11.82" fill="#c8474d"/><rect x="1341.90" y="989.06" width="3.01" height="9.54" fill="#5190e0"/><rect x="1345.01" y="986.54" width="3.01" height="12.06" fill="#c8474d"/><rect x="1345.01" y="990.04" width="3.01" height="8.56" fill="#8fd33d"/><rect x="1345.01" y="989.24" width="3.01" height="9.36" fill="#5190e0"/><rect x="1348.12" y="987.22" width="3.01" height="11.38" fill="#c8474d"/><rect x="1348.12" y="990.72" width="3.01" height="7.88" fill="#8fd33d"/><rect x="1348.12" y="989.45" width="3.01" height="9.15" fill="#5190e0"/><rect x="1351.23" y="986.82" width="3.01" height="11.78" fill="#c8474d"/><rect x="1351.23" y="990.32" width="3.01" height="8.28" fill="#8fd33d"/><rect x="1351.23" y="988.83" width="3.01" height="9.77" fill="#5190e0"/><rect x="1354.34" y="987.15" width="3.01" height="11.45" fill="#c8474d"/><rect x="1354.34" y="990.65" width="3.01" height="7.95" fill="#8fd33d"/><rect x="1354.34" y="988.97" width="3.01" height="9.63" fill="#5190e0"/><rect x="1357.45" y="983.67" width="3.01" height="14.93" fill="#8fd33d"/><rect x="1357.45" y="985.67" width="3.01" height="12.93" fill="#c8474d"/><rect x="1357.45" y="988.76" width="3.01" height="9.84" fill="#5190e0"/><rect x="1363.67" y="987.07" width="3.01" height="11.53" fill="#c8474d"/><rect x="1363.67" y="990.57" width="3.01" height="8.03" fill="#8fd33d"/><rect x="1363.67" y="989.40" width="3.01" height="9.20" fill="#5190e0"/><rect x="1366.78" y="985.46" width="3.01" height="13.14" fill="#c8474d"/><rect x="1366.78" y="988.96" width="3.01" height="9.64" fill="#8fd33d"/><rect x="1366.78" y="988.54" width="3.01" height="10.06" fill="#5190e0"/><rect x="1373.00" y="987.14" width="3.01" height="11.46" fill="#8fd33d"/><rect x="1373.00" y="988.44" width="3.01" height="10.16" fill="#c8474d"/><rect x="1373.00" y="989.33" width="3.01" height="9.27" fill="#5190e0"/><rect x="1376.11" y="985.44" width="3.01" height="13.16" fill="#8fd33d"/><rect x="1376.11" y="986.74" width="3.01" height="11.86" fill="#c8474d"/><rect x="1376.11" y="989.49" width="3.01" height="9.11" fill="#5190e0"/><rect x="1379.22" y="987.01" width="3.01" height="11.59" fill="#8fd33d"/><rect x="1379.22" y="988.31" width="3.01" height="10.29" fill="#c8474d"/><rect x="1379.22" y="988.82" width="3.01" height="9.78" fill="#5190e0"/><rect x="1382.33" y="984.89" width="3.01" height="13.71" fill="#8fd33d"/><rect x="1382.33" y="986.19" width="3.01" height="12.41" fill="#c8474d"/><rect x="1382.33" y="988.37" width="3.01" height="10.23" fill="#5190e0"/><rect x="1385.44" y="986.56" width="3.01" height="12.04" fill="#8fd33d"/><rect x="1385.44" y="987.86" width="3.01" height="10.74" fill="#c8474d"/><rect x="1385.44" y="989.45" width="3.01" height="9.15" fill="#5190e0"/><rect x="1388.55" y="985.00" width="3.01" height="13.60" fill="#8fd33d"/><rect x="1388.55" y="986.30" width="3.01" height="12.30" fill="#c8474d"/><rect x="1388.55" y="989.10" width="3.01" height="9.50" fill="#5190e0"/><rect x="1391.66" y="985.33" width="3.01" height="13.27" fill="#8fd33d"/><rect x="1391.66" y="986.63" width="3.01" height="11.97" fill="#c8474d"/><rect x="1391.66" y="988.85" width="3.01" height="9.75" fill="#5190e0"/><rect x="1394.77" y="986.00" width="3.01" height="12.60" fill="#8fd33d"/><rect x="1394.77" y="987.30" width="3.01" height="11.30" fill="#c8474d"/><rect x="1394.77" y="989.53" width="3.01" height="9.07" fill="#5190e0"/><rect x="1397.88" y="987.12" width="3.01" height="11.48" fill="#8fd33d"/><rect x="1397.88" y="988.42" width="3.01" height="10.18" fill="#c8474d"/><rect x="1397.88" y="989.25" width="3.01" height="9.35" fill="#5190e0"/><rect x="1400.99" y="984.45" width="3.01" height="14.15" fill="#8fd33d"/><rect x="1400.99" y="986.45" width="3.01" height="12.15" fill="#c8474d"/><rect x="1400.99" y="989.10" width="3.01" height="9.50" fill="#5190e0"/><rect x="1407.21" y="986.67" width="3.01" height="11.93" fill="#8fd33d"/><rect x="1407.21" y="987.97" width="3.01" height="10.63" fill="#c8474d"/><rect x="1407.21" y="989.00" width="3.01" height="9.60" fill="#5190e0"/><rect x="1413.43" y="986.60" width="3.01" height="12.00" fill="#c8474d"/><rect x="1413.43" y="990.10" width="3.01" height="8.50" fill="#8fd33d"/><rect x="1413.43" y="988.36" width="3.01" height="10.24" fill="#5190e0"/><rect x="1416.54" y="986.32" width="3.01" height="12.28" fill="#8fd33d"/><rect x="1416.54" y="987.62" width="3.01" height="10.98" fill="#c8474d"/><rect x="1416.54" y="988.59" width="3.01" height="10.01" fill="#5190e0"/><rect x="1419.65" y="985.69" width="3.01" height="12.91" fill="#c8474d"/><rect x="1419.65" y="986.69" width="3.01" height="11.91" fill="#8fd33d"/><rect x="1419.65" y="996.60" width="3.01" height="2.00" fill="#5190e0"/><rect x="1422.76" y="986.27" width="3.01" height="12.33" fill="#c8474d"/><rect x="1422.76" y="989.77" width="3.01" height="8.83" fill="#8fd33d"/><rect x="1422.76" y="988.46" width="3.01" height="10.14" fill="#5190e0"/><rect x="1425.87" y="984.80" width="3.01" height="13.80" fill="#c8474d"/><rect x="1425.87" y="988.30" width="3.01" height="10.30" fill="#8fd33d"/><rect x="1425.87" y="988.62" width="3.01" height="9.98" fill="#5190e0"/><rect x="1428.98" y="984.74" width="3.01" height="13.86" fill="#8fd33d"/><rect x="1428.98" y="986.74" width="3.01" height="11.86" fill="#c8474d"/><rect x="1428.98" y="988.34" width="3.01" height="10.26" fill="#5190e0"/><rect x="346.2" y="998.6" width="1" height="5.6" fill="#999"/><text x="337.8" y="1015.2" font-size="10" fill="#111">ugust</text><rect x="441.9" y="998.6" width="1" height="5.6" fill="#999"/><text x="442.4" y="1015.2" font-size="10" text-anchor="middle" fill="#111">September</text><rect x="535.7" y="998.6" width="1" height="5.6" fill="#999"/><text x="536.2" y="1015.2" font-size="10" text-anchor="middle" fill="#111">October</text><rect x="632.1" y="998.6" width="1" height="5.6" fill="#999"/><text x="632.6" y="1015.2" font-size="10" text-anchor="middle" fill="#111">November</text><rect x="726.1" y="998.6" width="1" height="5.6" fill="#999"/><text x="726.6" y="1015.2" font-size="10" text-anchor="middle" fill="#111">December</text><rect x="821.9" y="998.6" width="1" height="5.6" fill="#999"/><text x="822.4" y="1015.2" font-size="10" text-anchor="middle" fill="#111">2023</text><rect x="918.3" y="998.6" width="1" height="5.6" fill="#999"/><text x="918.8" y="1015.2" font-size="10" text-anchor="middle" fill="#111">February</text><rect x="1005.5" y="998.6" width="1" height="5.6" fill="#999"/><text x="1006.0" y="1015.2" font-size="10" text-anchor="middle" fill="#111">March</text><rect x="1102.1" y="998.6" width="1" height="5.6" fill="#999"/><text x="1102.6" y="1015.2" font-size="10" text-anchor="middle" fill="#111">April</text><rect x="1195.3" y="998.6" width="1" height="5.6" fill="#999"/><text x="1195.8" y="1015.2" font-size="10" text-anchor="middle" fill="#111">May</text><rect x="1292.0" y="998.6" width="1" height="5.6" fill="#999"/><text x="1292.5" y="1015.2" font-size="10" text-anchor="middle" fill="#111">June</text><rect x="1385.7" y="998.6" width="1" height="5.6" fill="#999"/><text x="1386.2" y="1015.2" font-size="10" text-anchor="middle" fill="#111">July</text><rect x="324.2" y="944.5" width="1.6" height="13" fill="#d0d0d0"/><path d="M325.5 951.0 L333.0 944.5 L333.0 957.5 Z" fill="#d0d0d0"/><path d="M318.5 969.0 L326.0 962.5 L326.0 975.5 Z" fill="#d0d0d0"/><path d="M325.5 969.0 L333.0 962.5 L333.0 975.5 Z" fill="#d0d0d0"/><rect x="317.2" y="981.5" width="1.6" height="13" fill="#d0d0d0"/><path d="M318.5 988.0 L326.0 981.5 L326.0 994.5 Z" fill="#d0d0d0"/><path d="M325.5 988.0 L333.0 981.5 L333.0 994.5 Z" fill="#d0d0d0"/><rect x="1444.2" y="944.5" width="1.6" height="13" fill="#d0d0d0"/><path d="M1445.0 951.0 L1437.5 944.5 L1437.5 957.5 Z" fill="#d0d0d0"/><path d="M1445.0 969.0 L1437.5 962.5 L1437.5 975.5 Z" fill="#d0d0d0"/><path d="M1452.0 969.0 L1444.5 962.5 L1444.5 975.5 Z" fill="#d0d0d0"/><rect x="1451.2" y="981.5" width="1.6" height="13" fill="#d0d0d0"/><path d="M1445.0 988.0 L1437.5 981.5 L1437.5 994.5 Z" fill="#d0d0d0"/><path d="M1452.0 988.0 L1444.5 981.5 L1444.5 994.5 Z" fill="#d0d0d0"/><rect x="248.2" y="495" width="7.6" height="408" rx="3.8" fill="#efefef" stroke="#b8b8b8" stroke-width="1"/><rect x="248.1" y="857" width="7.8" height="46" rx="3.9" fill="#2a76f0"/><circle cx="252" cy="857" r="7.8" fill="#2a76f0"/></svg><span class="t" id="t36" style="left:1269.20px;top:501.00px;font-size:15.50px;color:#c8474d;transform:scaleX(0.8508);">X</span><span class="t" id="t37" style="left:1269.20px;top:521.00px;font-size:15.50px;color:#8fd33d;transform:scaleX(0.8121);">Y</span><span class="t" id="t38" style="left:1269.20px;top:541.00px;font-size:15.50px;color:#5190e0;transform:scaleX(0.8660);">Z</span><span class="t" id="t39" style="left:1269.20px;top:561.00px;font-size:15.50px;color:#f29bb9;transform:scaleX(0.8641);">PVS</span><span class="t" id="t40" style="left:1269.40px;top:581.00px;font-size:15.50px;color:#c9c9c9;transform:scaleX(0.9768);">&Eacute;v&eacute;nement</span><span class="t" id="t41" style="left:316.60px;top:921.00px;font-size:15.60px;color:#111;transform:scaleX(1.0351);">22-02-2023 03:28:44</span><span class="t" id="t42" style="left:775.00px;top:921.00px;font-size:15.60px;color:#111;transform:scaleX(0.9783);">Date/heure (Europe/Amsterdam)</span><span class="t" id="t43" style="left:1303.40px;top:921.00px;font-size:15.60px;color:#111;transform:scaleX(1.0344);">01-03-2023 03:28:44</span><div class="abs" style="left:280.2px;top:679.2px;width:0;height:0;transform:rotate(-90deg);"><span class="t" id="ylab" style="left:-44.5px;top:-9.0px;font-size:16px;color:#111;transform:scaleX(0.9570);">Vmax [mm/s]</span></div>
<div class="abs" style="left:222px;top:1045px;width:1264px;height:12px;background:#e9edf3;"></div>
<div class="abs" style="left:221px;top:1085px;width:1264px;height:164px;box-sizing:border-box;border:1px solid #e0e0e0;background:#fff;"></div>
<span class="t" id="t22" style="left:250.80px;top:1119.00px;font-size:15.50px;color:#1a1a1a;transform:scaleX(0.9891);">Vitesse de vibratio</span>
<span class="t" id="t23" style="left:376.40px;top:1119.00px;font-size:15.50px;color:#1a1a1a;transform:scaleX(0.8812);-webkit-text-stroke:0.25px currentColor;">n</span>
<span class="t" id="t24" style="left:386.90px;top:1119.00px;font-size:15.50px;color:#1a1a1a;transform:scaleX(0.9923);-webkit-text-stroke:0.25px currentColor;">maximale/fr&eacute;quence</span>
<div class="abs" style="left:251px;top:1176px;width:249px;height:57px;box-sizing:border-box;border:1px solid #cfcfcf;border-radius:3px;background:#fff;box-shadow:0 1px 2px rgba(0,0,0,0.15);"></div>
<svg class="abs" style="left:471px;top:1200px" width="14" height="12" viewBox="471 1200 14 12"><path d="M474 1205 L478.3 1209.3 L482.6 1205" fill="none" stroke="#222" stroke-width="1.5"/></svg>
<svg class="abs" style="left:1350px;top:1105px" width="120" height="36" viewBox="1350 1105 120 36"><circle cx="1365.00" cy="1120.60" r="7.00" fill="none" stroke="#000" stroke-width="2.70"/><path d="M1371.40 1126.80 L1379.00 1133.80" stroke="#000" stroke-width="4.00" stroke-linecap="butt"/><path d="M1361.30 1120.60 H1368.70" stroke="#000" stroke-width="1.50"/><circle cx="1403.00" cy="1120.60" r="7.00" fill="none" stroke="#000" stroke-width="2.70"/><path d="M1409.40 1126.80 L1417.00 1133.80" stroke="#000" stroke-width="4.00" stroke-linecap="butt"/><path d="M1399.30 1120.60 H1406.70" stroke="#000" stroke-width="1.50"/><path d="M1403.00 1116.90 V1124.30" stroke="#000" stroke-width="1.50"/><circle cx="1446.00" cy="1123.80" r="3.00" fill="#000"/><path d="M1435.00 1113.00 L1441.00 1118.90" stroke="#000" stroke-width="3.40"/><path d="M1442.50 1120.40 L1435.90 1120.40 L1442.50 1114.00 Z" fill="#000"/><path d="M1435.00 1134.60 L1441.00 1128.70" stroke="#000" stroke-width="3.40"/><path d="M1442.50 1127.20 L1435.90 1127.20 L1442.50 1133.60 Z" fill="#000"/><path d="M1457.00 1113.00 L1451.00 1118.90" stroke="#000" stroke-width="3.40"/><path d="M1449.50 1120.40 L1456.10 1120.40 L1449.50 1114.00 Z" fill="#000"/><path d="M1457.00 1134.60 L1451.00 1128.70" stroke="#000" stroke-width="3.40"/><path d="M1449.50 1127.20 L1456.10 1127.20 L1449.50 1133.60 Z" fill="#000"/></svg>
<div class="abs" style="left:692px;top:81px;width:272px;height:401px;box-sizing:border-box;border:1px solid #dfe0e2;background:#fff;z-index:20;box-shadow:0 1px 1px rgba(0,0,0,0.10);"></div>
<div class="abs" style="left:693px;top:161px;width:270px;height:1px;background:#dfe0e2;z-index:21;"></div>
<div class="abs" style="left:693px;top:241px;width:270px;height:1px;background:#dfe0e2;z-index:21;"></div>
<div class="abs" style="left:693px;top:321px;width:270px;height:1px;background:#dfe0e2;z-index:21;"></div>
<div class="abs" style="left:693px;top:401px;width:270px;height:1px;background:#dfe0e2;z-index:21;"></div>
<span class="t" id="t25" style="left:733.30px;top:115.00px;font-size:12.60px;color:#7a7a7a;z-index:22;transform:scaleX(0.9058);-webkit-text-stroke:0.2px #7a7a7a;">Profil</span>
<span class="t" id="t26" style="left:733.30px;top:195.00px;font-size:12.60px;color:#7a7a7a;z-index:22;transform:scaleX(0.8787);-webkit-text-stroke:0.2px #7a7a7a;">S&eacute;curit&eacute;</span>
<span class="t" id="t27" style="left:733.30px;top:275.00px;font-size:12.60px;color:#7a7a7a;z-index:22;transform:scaleX(0.8939);-webkit-text-stroke:0.2px #7a7a7a;">Autorisations pour le partage de co...</span>
<span class="t" id="t28" style="left:733.30px;top:355.00px;font-size:12.60px;color:#7a7a7a;z-index:22;transform:scaleX(0.8976);-webkit-text-stroke:0.2px #7a7a7a;">Mod&egrave;les de rapport</span>
<div class="abs" style="left:838.4px;top:352px;width:30px;height:20px;box-sizing:border-box;border:1px solid #8a8a8a;border-radius:3px;z-index:22;"></div>
<span class="t" id="t29" style="left:843.40px;top:358.00px;font-size:9.20px;color:#8a8a8a;z-index:22;transform:scaleX(0.8488);">BETA</span>
<span class="t" id="t30" style="left:733.30px;top:435.00px;font-size:12.60px;color:#7a7a7a;z-index:22;transform:scaleX(0.8786);-webkit-text-stroke:0.2px #7a7a7a;">T&eacute;l&eacute;chargements</span>
<div class="abs" style="left:819px;top:418px;width:22px;height:22px;border-radius:50%;background:#f08a24;z-index:22;"></div>
<span class="t" id="t31" style="left:825.80px;top:425.00px;font-size:9.60px;color:#fff;z-index:23;transform:scaleX(0.9183);-webkit-text-stroke:0.3px #fff;">10</span>
<div class="abs" style="left:16px;top:1058px;width:360px;height:192px;border-radius:8px 8px 0 0;background:#fafafa;box-shadow:4px 3px 9px -1px rgba(0,0,0,0.32);z-index:30;"></div>
<div class="abs" style="left:16px;top:1058px;width:360px;height:49px;border-radius:8px 8px 0 0;background:#595959;z-index:31;"></div>
<span class="t" id="t32" style="left:28.20px;top:1076.00px;font-size:12.40px;color:#fff;z-index:32;transform:scaleX(0.8522);-webkit-text-stroke:0.45px #fff;">T&Eacute;L&Eacute;CHARGEMENTS (0/3)</span>
<div class="abs" style="left:16px;top:1107px;width:345px;height:143px;background:#fff;z-index:31;"></div>
<div class="abs" style="left:361px;top:1107px;width:1px;height:143px;background:#e4e4e4;z-index:31;"></div>
<div class="abs" style="left:16px;top:1154px;width:345px;height:1px;background:#333;z-index:32;"></div>
<div class="abs" style="left:16px;top:1202px;width:345px;height:1px;background:#333;z-index:32;"></div>
<span class="t" id="t33" style="left:36.10px;top:1125.00px;font-size:12.20px;color:#2e2e2e;z-index:32;transform:scaleX(0.9605);">OmniDots_guest_2...9590100_vtop.csv</span>
<span class="t" id="t34" style="left:36.10px;top:1173.00px;font-size:12.20px;color:#2e2e2e;z-index:32;transform:scaleX(0.9666);">OmniDots_guest_2...0000100_vtop.pdf</span>
<span class="t" id="t35" style="left:36.10px;top:1221.00px;font-size:12.20px;color:#2e2e2e;z-index:32;transform:scaleX(0.9666);">OmniDots_guest_2...0000100_vtop.pdf</span>
<svg class="abs" style="left:270px;top:1060px;z-index:33" width="100" height="190" viewBox="270 1060 100 190"><path d="M288.6 1074.8 H284.6 Q281.6 1074.8 281.6 1077.8 V1088.3 Q281.6 1091.3 284.6 1091.3 H295 Q298 1091.3 298 1088.3 V1084.6" fill="none" stroke="#fff" stroke-width="2.9"/><path d="M288.6 1084.4 L301.6 1071.2" fill="none" stroke="#fff" stroke-width="2.7"/><path d="M294.6 1068.8 H303.9 V1078.2 H301.2 V1071.6 H294.6 Z" fill="#fff"/><path d="M314 1078 L322 1085.6 L330 1078" fill="none" stroke="#fff" stroke-width="2.6" stroke-linecap="round" stroke-linejoin="round"/><path d="M345.3 1074.4 L358.9 1087.7 M358.9 1074.4 L345.3 1087.7" fill="none" stroke="#fff" stroke-width="2.6" stroke-linecap="round"/><circle cx="329.48" cy="1119.22" r="2.15" fill="#0a0a0a"/><circle cx="336.16" cy="1122.46" r="2.15" fill="#0a0a0a"/><circle cx="335.34" cy="1136.16" r="2.15" fill="#0a0a0a"/><circle cx="328.32" cy="1138.58" r="2.15" fill="#0a0a0a"/><circle cx="321.64" cy="1135.34" r="2.15" fill="#0a0a0a"/><circle cx="319.22" cy="1128.32" r="2.15" fill="#0a0a0a"/><circle cx="322.46" cy="1121.64" r="2.15" fill="#0a0a0a"/><circle cx="329.48" cy="1167.22" r="2.15" fill="#0a0a0a"/><circle cx="336.16" cy="1170.46" r="2.15" fill="#0a0a0a"/><circle cx="335.34" cy="1184.16" r="2.15" fill="#0a0a0a"/><circle cx="328.32" cy="1186.58" r="2.15" fill="#0a0a0a"/><circle cx="321.64" cy="1183.34" r="2.15" fill="#0a0a0a"/><circle cx="319.22" cy="1176.32" r="2.15" fill="#0a0a0a"/><circle cx="322.46" cy="1169.64" r="2.15" fill="#0a0a0a"/><circle cx="329.48" cy="1215.22" r="2.15" fill="#0a0a0a"/><circle cx="336.16" cy="1218.46" r="2.15" fill="#0a0a0a"/><circle cx="335.34" cy="1232.16" r="2.15" fill="#0a0a0a"/><circle cx="328.32" cy="1234.58" r="2.15" fill="#0a0a0a"/><circle cx="321.64" cy="1231.34" r="2.15" fill="#0a0a0a"/><circle cx="319.22" cy="1224.32" r="2.15" fill="#0a0a0a"/><circle cx="322.46" cy="1217.64" r="2.15" fill="#0a0a0a"/></svg>
<div class="abs" style="left:1629px;top:1173.6px;width:60.4px;height:60.4px;border-radius:50%;background:#f4d94a;box-shadow:0 2px 8px rgba(0,0,0,0.18);z-index:40;"></div>
<svg class="abs" style="left:1640px;top:1185px;z-index:41" width="40" height="40" viewBox="1640 1185 40 40"><rect x="1648.6" y="1189" width="26" height="20" rx="5.5" fill="#36475c"/><rect x="1642" y="1191.6" width="29.8" height="24" rx="6.5" fill="#f6dc48"/><rect x="1644" y="1193.7" width="25.8" height="19.8" rx="4.6" fill="#36475c"/><path d="M1653.4 1213 L1656.9 1218.4 L1660.2 1213 Z" fill="#36475c"/></svg>
<div class="abs" style="left:1704px;top:0;width:10px;height:1250px;background:#fafafa;z-index:50;"></div>
<div class="abs" style="left:1705px;top:0;width:1px;height:1250px;background:#e8e8e8;z-index:51;"></div>
<div class="abs" style="left:1709px;top:3px;width:5px;height:758px;border-radius:4px 0 0 4px;background:#c1c1c1;z-index:52;"></div>
<div class="abs" style="left:-14px;top:1236px;width:28px;height:28px;border-radius:50%;box-shadow:0 0 0 20px #2a2418;clip-path:inset(0 0 0 0);z-index:60;display:none"></div>
<div class="abs" style="left:0;top:1222px;width:760px;height:28px;z-index:58;background:linear-gradient(to bottom,rgba(0,0,0,0),rgba(0,0,0,0.035) 45%,rgba(0,0,0,0.10));-webkit-mask-image:linear-gradient(to right,#000 0,#000 45%,rgba(0,0,0,0) 100%);mask-image:linear-gradient(to right,#000 0,#000 45%,rgba(0,0,0,0) 100%);"></div>
<svg class="abs" style="left:0;top:1239px;z-index:60" width="12" height="11" viewBox="0 0 12 11"><path d="M0 0 C0.4 6 3.5 10 10 11 L0 11 Z" fill="#2b2519"/></svg>
</body></html>
